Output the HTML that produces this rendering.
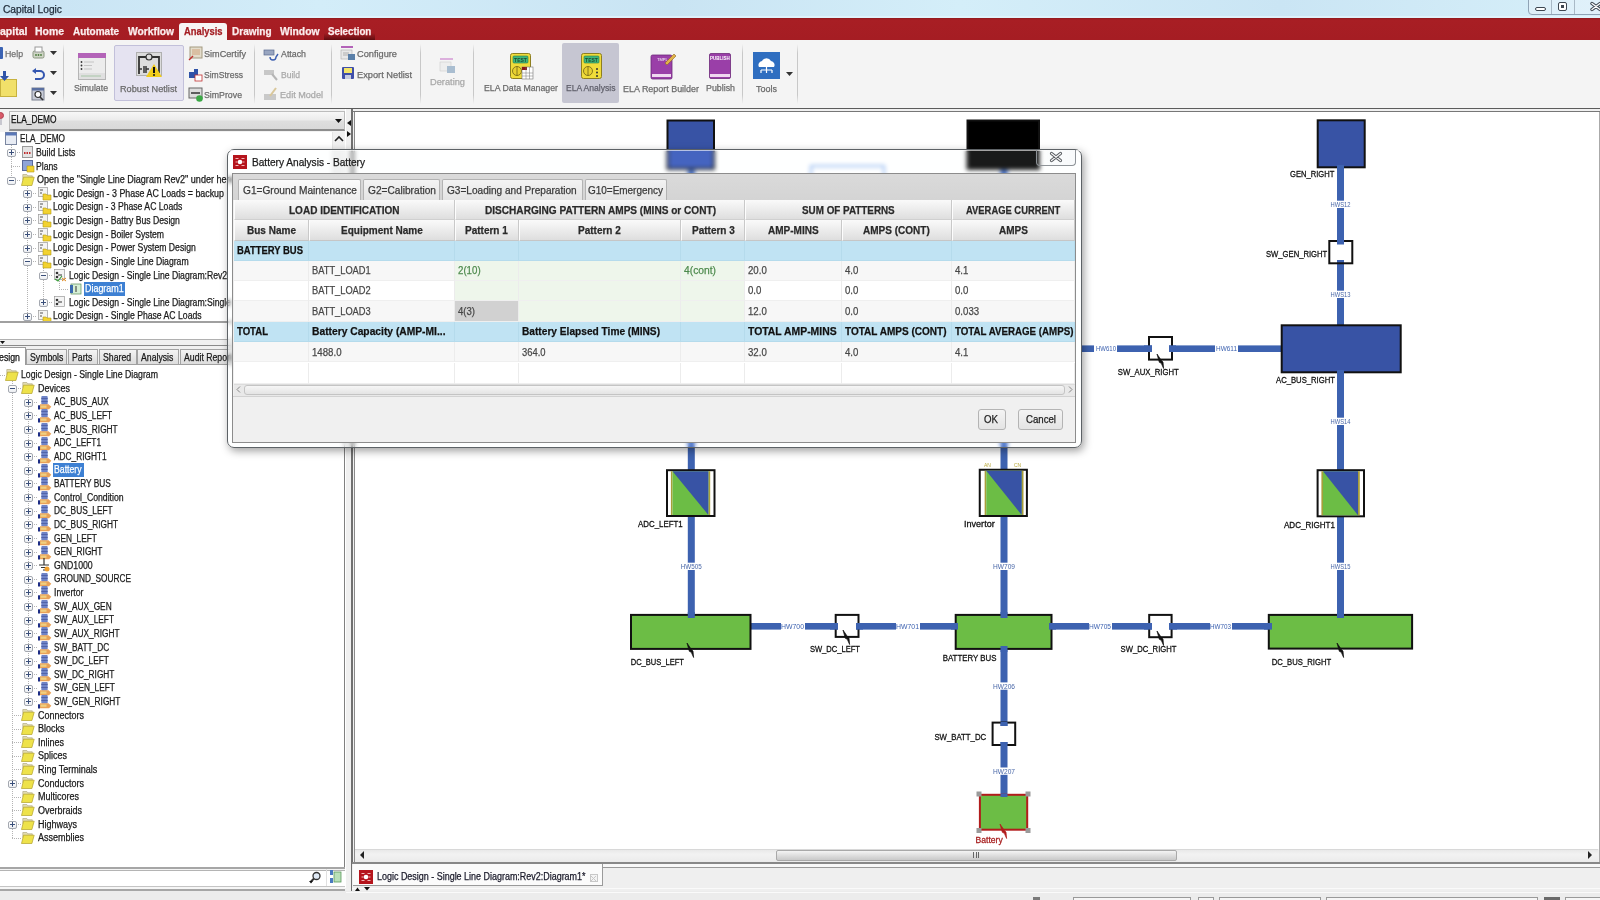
<!DOCTYPE html>
<html><head><meta charset="utf-8">
<style>
*{margin:0;padding:0;box-sizing:border-box}
html,body{width:1600px;height:900px;overflow:hidden;background:#f0f0f0;font-family:"Liberation Sans",sans-serif;color:#222;position:relative}
.a{position:absolute}
.t{position:absolute;white-space:nowrap;line-height:1;-webkit-text-stroke:.25px currentColor}
svg{overflow:visible}
</style></head><body>

<div class="a" style="left:0px;top:0px;width:1600px;height:18px;background:linear-gradient(90deg,#c8e3f3 0%,#d3edf9 20%,#c9e4f3 42%,#d4eef9 60%,#cae5f4 80%,#d6eff9 100%)"></div>
<div class="a" style="left:0px;top:16px;width:1600px;height:1.5px;background:rgba(230,245,252,.7)"></div>
<div class="t" style="left:3.00px;top:5.37px;font-size:10.2px;color:#1f2b38;transform:scaleX(1.0006);transform-origin:0 0;">Capital Logic</div>
<div class="a" style="left:1528px;top:-2px;width:80px;height:17px;border:1px solid #8fa3b5;border-radius:0 0 0 4px;background:rgba(230,242,250,.6)"></div>
<div class="a" style="left:1551px;top:0px;width:1px;height:14px;background:#a9b9c6"></div>
<div class="a" style="left:1574px;top:0px;width:1px;height:14px;background:#a9b9c6"></div>
<div class="a" style="left:1535px;top:7px;width:11px;height:4px;border:1.5px solid #3d4650;border-radius:2px;background:#fff"></div>
<div class="a" style="left:1558px;top:2px;width:9px;height:9px;border:1.5px solid #3d4650;border-radius:2px;background:#fff"></div>
<div class="a" style="left:1561px;top:5px;width:3px;height:3px;background:#3d4650"></div>
<svg class="a" style="left:1590px;top:2px;" width="12" height="9" viewBox="0 0 12 9"><path d="M2 1.5l8 6M10 1.5l-8 6" stroke="#3d4650" stroke-width="3.4" stroke-linecap="round"/><path d="M2 1.5l8 6M10 1.5l-8 6" stroke="#fff" stroke-width="1.4" stroke-linecap="round"/></svg>
<div class="a" style="left:0px;top:18px;width:1600px;height:22px;background:linear-gradient(#8f1a1e 0,#a81e24 2px,#a51d23 100%)"></div>
<div class="t" style="left:0.00px;top:26.54px;font-size:10px;color:#fbeeee;font-weight:bold;transform:scaleX(1.0530);transform-origin:0 0;">apital</div>
<div class="t" style="left:35.00px;top:26.54px;font-size:10px;color:#fbeeee;font-weight:bold;transform:scaleX(1.0438);transform-origin:0 0;">Home</div>
<div class="t" style="left:73.00px;top:26.54px;font-size:10px;color:#fbeeee;font-weight:bold;transform:scaleX(0.9976);transform-origin:0 0;">Automate</div>
<div class="t" style="left:128.00px;top:26.54px;font-size:10px;color:#fbeeee;font-weight:bold;transform:scaleX(1.0265);transform-origin:0 0;">Workflow</div>
<div class="a" style="left:179px;top:23px;width:48px;height:17px;background:#f7f5f5;border-radius:3px 3px 0 0"></div>
<div class="t" style="left:184.00px;top:26.54px;font-size:10px;color:#a51d23;font-weight:bold;transform:scaleX(0.9361);transform-origin:0 0;">Analysis</div>
<div class="t" style="left:231.50px;top:26.54px;font-size:10px;color:#fbeeee;font-weight:bold;transform:scaleX(1.0013);transform-origin:0 0;">Drawing</div>
<div class="t" style="left:280.00px;top:26.54px;font-size:10px;color:#fbeeee;font-weight:bold;transform:scaleX(1.0332);transform-origin:0 0;">Window</div>
<div class="a" style="left:324px;top:33px;width:51px;height:7px;background:linear-gradient(rgba(40,0,0,0),rgba(40,0,0,.55))"></div>
<div class="t" style="left:327.50px;top:26.54px;font-size:10px;color:#fbeeee;font-weight:bold;transform:scaleX(0.9740);transform-origin:0 0;">Selection</div>
<div class="a" style="left:0px;top:40px;width:1600px;height:68px;background:#f4f4f4"></div>
<div class="a" style="left:0px;top:107.6px;width:1600px;height:1.8px;background:#5c5c5c"></div>
<div class="a" style="left:63px;top:44px;width:1px;height:60px;background:linear-gradient(rgba(200,200,200,0),#c8c8c8 15%,#c8c8c8 85%,rgba(200,200,200,0))"></div>
<div class="a" style="left:254px;top:44px;width:1px;height:60px;background:linear-gradient(rgba(200,200,200,0),#c8c8c8 15%,#c8c8c8 85%,rgba(200,200,200,0))"></div>
<div class="a" style="left:331px;top:44px;width:1px;height:60px;background:linear-gradient(rgba(200,200,200,0),#c8c8c8 15%,#c8c8c8 85%,rgba(200,200,200,0))"></div>
<div class="a" style="left:420px;top:44px;width:1px;height:60px;background:linear-gradient(rgba(200,200,200,0),#c8c8c8 15%,#c8c8c8 85%,rgba(200,200,200,0))"></div>
<div class="a" style="left:473px;top:44px;width:1px;height:60px;background:linear-gradient(rgba(200,200,200,0),#c8c8c8 15%,#c8c8c8 85%,rgba(200,200,200,0))"></div>
<div class="a" style="left:742px;top:44px;width:1px;height:60px;background:linear-gradient(rgba(200,200,200,0),#c8c8c8 15%,#c8c8c8 85%,rgba(200,200,200,0))"></div>
<div class="a" style="left:797px;top:44px;width:1px;height:60px;background:linear-gradient(rgba(200,200,200,0),#c8c8c8 15%,#c8c8c8 85%,rgba(200,200,200,0))"></div>
<div class="a" style="left:-2px;top:47px;width:5px;height:12px;background:#3b63b3;border-radius:1px"></div>
<div class="t" style="left:5.00px;top:48.96px;font-size:9.5px;color:#707070;transform:scaleX(0.9213);transform-origin:0 0;">Help</div>
<svg class="a" style="left:32px;top:47px;" width="13" height="13" viewBox="0 0 13 13"><rect x="1" y="4" width="11" height="7" rx="1.5" fill="#cfd6c6" stroke="#8a9480"/><rect x="3" y="0" width="7" height="5" fill="#fff" stroke="#999"/><circle cx="4" cy="8" r=".9" fill="#4a7a3a"/><circle cx="6.5" cy="8" r=".9" fill="#4a7a3a"/><circle cx="9" cy="8" r=".9" fill="#4a7a3a"/></svg>
<svg class="a" style="left:50px;top:51px;" width="7" height="4" viewBox="0 0 7 4"><path d="M0 0h7l-3.5 4z" fill="#333"/></svg>
<svg class="a" style="left:50px;top:71px;" width="7" height="4" viewBox="0 0 7 4"><path d="M0 0h7l-3.5 4z" fill="#333"/></svg>
<svg class="a" style="left:50px;top:91px;" width="7" height="4" viewBox="0 0 7 4"><path d="M0 0h7l-3.5 4z" fill="#333"/></svg>
<div class="a" style="left:0px;top:79px;width:17px;height:18px;background:#f1e06a;border:1px solid #c7b23e"></div>
<svg class="a" style="left:0px;top:71px;" width="9" height="10" viewBox="0 0 9 10"><path d="M3 0h3v5h3l-4.5 5l-4.5-5h3z" fill="#2f53a8"/></svg>
<svg class="a" style="left:32px;top:68px;" width="13" height="12" viewBox="0 0 13 12"><path d="M3 3h5a4 4 0 0 1 0 8h-5" fill="none" stroke="#3356b0" stroke-width="2"/><path d="M0 3l4-3v6z" fill="#3356b0"/></svg>
<svg class="a" style="left:32px;top:88px;" width="13" height="13" viewBox="0 0 13 13"><rect x="0" y="0" width="12" height="12" fill="#c7cbd6" stroke="#7a8090"/><rect x="0" y="0" width="12" height="2.5" fill="#5a6fa0"/><circle cx="6" cy="6.5" r="3" fill="#fff" stroke="#333" stroke-width="1.2"/><path d="M8 9l3 3" stroke="#333" stroke-width="1.6"/></svg>
<svg class="a" style="left:78px;top:53px;" width="28" height="27" viewBox="0 0 28 27"><rect x=".5" y=".5" width="27" height="26" fill="#ececec" stroke="#b5b5b5"/><rect x="0" y="0" width="28" height="5" fill="#b363b8"/><circle cx="3.5" cy="9" r=".9" fill="#333"/><circle cx="3.5" cy="12.5" r=".9" fill="#333"/><circle cx="3.5" cy="16" r=".9" fill="#333"/><path d="M6 9h10M6 12.5h8M6 16h8" stroke="#bbb" stroke-width=".8"/><rect x="1" y="20" width="26" height="6" fill="#e0e0e0"/><path d="M3 23h20" stroke="#9ac09a" stroke-width=".8"/></svg>
<div class="t" style="left:74.00px;top:82.96px;font-size:9.5px;color:#6a6a6a;transform:scaleX(0.9199);transform-origin:0 0;">Simulate</div>
<div class="a" style="left:114px;top:45px;width:70px;height:56px;background:#e5e3f1;border:1px solid #c2c0da;border-radius:2px"></div>
<svg class="a" style="left:136px;top:52px;" width="27" height="26" viewBox="0 0 27 26"><rect x=".5" y=".5" width="25" height="23" fill="#dcdcdc" stroke="#b0b0b0"/><path d="M3 22V5h20v16" fill="none" stroke="#333" stroke-width="1.8"/><circle cx="13" cy="5" r="3" fill="#ddd" stroke="#333" stroke-width="1.2"/><path d="M3 17h3M8 14v7M10 14v7M10 17h3" stroke="#333" stroke-width="1.5"/><path d="M18 12l8 13h-16z" fill="#f2cd1a"/><path d="M18 15v6" stroke="#111" stroke-width="2"/><circle cx="18" cy="23" r="1" fill="#111"/></svg>
<div class="t" style="left:120.00px;top:83.96px;font-size:9.5px;color:#6a6a6a;transform:scaleX(0.9640);transform-origin:0 0;">Robust Netlist</div>
<svg class="a" style="left:189px;top:47px;" width="13" height="14" viewBox="0 0 13 14"><rect x="1" y="0" width="12" height="11" fill="#e3dccb" stroke="#a39a80"/><path d="M3 3h8M3 5h8M3 7h8" stroke="#c58a5a" stroke-width=".7"/><path d="M0 13l4-4" stroke="#c03030" stroke-width="1.5"/></svg>
<div class="t" style="left:204.00px;top:48.96px;font-size:9.5px;color:#6a6a6a;transform:scaleX(0.9588);transform-origin:0 0;">SimCertify</div>
<svg class="a" style="left:189px;top:68px;" width="13" height="13" viewBox="0 0 13 13"><rect x="0" y="4" width="8" height="6" fill="#2f53a8"/><rect x="5" y="1" width="4" height="8" fill="#2f53a8"/><rect x="6" y="7" width="7" height="6" fill="#fff" stroke="#c03030" stroke-width=".8"/></svg>
<div class="t" style="left:204.00px;top:69.96px;font-size:9.5px;color:#6a6a6a;transform:scaleX(0.9010);transform-origin:0 0;">SimStress</div>
<svg class="a" style="left:189px;top:88px;" width="14" height="14" viewBox="0 0 14 14"><rect x="0" y="0" width="13" height="10" fill="#dcdcdc" stroke="#666"/><path d="M2 5h9" stroke="#333" stroke-width="1.5"/><circle cx="10.5" cy="10.5" r="3.3" fill="#3aa845"/></svg>
<div class="t" style="left:204.00px;top:89.96px;font-size:9.5px;color:#6a6a6a;transform:scaleX(0.9229);transform-origin:0 0;">SimProve</div>
<svg class="a" style="left:264px;top:49px;" width="15" height="13" viewBox="0 0 15 13"><rect x="0" y="1" width="10" height="5" fill="#98a5c0" stroke="#5a6a90" stroke-width=".7"/><path d="M6 8a3 3 0 0 0 6 0l2-3" fill="none" stroke="#3d5fb0" stroke-width="1.4"/></svg>
<div class="t" style="left:281.00px;top:48.96px;font-size:9.5px;color:#6a6a6a;transform:scaleX(0.9283);transform-origin:0 0;">Attach</div>
<svg class="a" style="left:264px;top:69px;" width="14" height="12" viewBox="0 0 14 12"><rect x="0" y="1" width="10" height="5" fill="#c7c7c7"/><path d="M8 5l5 6" stroke="#b5b5b5" stroke-width="2"/></svg>
<div class="t" style="left:281.00px;top:69.96px;font-size:9.5px;color:#a8a8a8;transform:scaleX(0.8994);transform-origin:0 0;">Build</div>
<svg class="a" style="left:264px;top:87px;" width="14" height="14" viewBox="0 0 14 14"><rect x="0" y="7" width="12" height="6" fill="#c9c9c9"/><path d="M6 9l6-8" stroke="#d9c79a" stroke-width="2"/></svg>
<div class="t" style="left:280.00px;top:89.96px;font-size:9.5px;color:#a8a8a8;transform:scaleX(0.9581);transform-origin:0 0;">Edit Model</div>
<svg class="a" style="left:341px;top:46px;" width="15" height="15" viewBox="0 0 15 15"><rect x="0" y="0" width="12" height="2" fill="#b363b8"/><rect x="0" y="4" width="11" height="9" fill="#e8e8e8" stroke="#aaa" stroke-width=".6"/><path d="M2 7h6M2 9h6" stroke="#888" stroke-width=".6"/><rect x="7" y="8" width="7" height="6" fill="#5a7fa8"/></svg>
<div class="t" style="left:357.00px;top:48.96px;font-size:9.5px;color:#6a6a6a;transform:scaleX(0.9711);transform-origin:0 0;">Configure</div>
<svg class="a" style="left:342px;top:67px;" width="13" height="13" viewBox="0 0 13 13"><rect x="0" y="0" width="12" height="12" rx="1" fill="#3f4fa8"/><rect x="2" y="1" width="8" height="5" fill="#f3e46a"/><rect x="3" y="8" width="6" height="4" fill="#c8cde0"/></svg>
<div class="t" style="left:357.00px;top:69.96px;font-size:9.5px;color:#6a6a6a;transform:scaleX(0.9737);transform-origin:0 0;">Export Netlist</div>
<svg class="a" style="left:440px;top:58px;" width="16" height="16" viewBox="0 0 16 16"><rect x="0" y="0" width="13" height="2" fill="#dcb0dd"/><rect x="0" y="4" width="11" height="9" fill="#eee" stroke="#ccc" stroke-width=".6"/><rect x="7" y="8" width="8" height="7" fill="#a9bdd0"/></svg>
<div class="t" style="left:430.00px;top:76.96px;font-size:9.5px;color:#a8a8a8;transform:scaleX(0.9748);transform-origin:0 0;">Derating</div>
<svg class="a" style="left:510px;top:53px;" width="24" height="27" viewBox="0 0 24 27"><rect x=".5" y=".5" width="20" height="25" rx="2" fill="#f0dc3a" stroke="#8e7f20"/><rect x="3" y="3" width="15" height="7" rx="1" fill="#3fb87a" stroke="#2a7a50" stroke-width=".6"/><text x="10.5" y="9" font-size="5" font-weight="bold" text-anchor="middle" fill="#1d4a30" font-family="Liberation Sans">TEST</text><circle cx="7" cy="18" r="4.5" fill="#e8d030" stroke="#6e6218" stroke-width=".8"/><path d="M7 13.5v9" stroke="#6e6218" stroke-width=".8"/><rect x="12" y="14" width="11" height="12" fill="#fff" stroke="#777" stroke-width=".6"/><rect x="12" y="14" width="5" height="3" fill="#8b1a1a"/><path d="M12 20h11M12 23h11M16 14v12M19.5 14v12" stroke="#777" stroke-width=".5"/></svg>
<div class="t" style="left:484.00px;top:82.96px;font-size:9.5px;color:#6a6a6a;transform:scaleX(0.9219);transform-origin:0 0;">ELA Data Manager</div>
<div class="a" style="left:562px;top:43px;width:57px;height:60px;background:#c6c6d2;border-radius:2px"></div>
<svg class="a" style="left:581px;top:53px;" width="24" height="27" viewBox="0 0 24 27"><rect x=".5" y=".5" width="20" height="25" rx="2" fill="#f0dc3a" stroke="#8e7f20"/><rect x="3" y="3" width="15" height="7" rx="1" fill="#3fb87a" stroke="#2a7a50" stroke-width=".6"/><text x="10.5" y="9" font-size="5" font-weight="bold" text-anchor="middle" fill="#1d4a30" font-family="Liberation Sans">TEST</text><circle cx="7" cy="18" r="4.5" fill="#e8d030" stroke="#6e6218" stroke-width=".8"/><path d="M7 13.5v9" stroke="#6e6218" stroke-width=".8"/><circle cx="16" cy="16" r="1" fill="#333"/><circle cx="16" cy="19.5" r="1" fill="#333"/><circle cx="16" cy="23" r="1" fill="#333"/></svg>
<div class="t" style="left:566.00px;top:82.96px;font-size:9.5px;color:#5f5f6a;transform:scaleX(0.9013);transform-origin:0 0;">ELA Analysis</div>
<svg class="a" style="left:651px;top:53px;" width="25" height="27" viewBox="0 0 25 27"><rect x="0" y="2" width="21" height="24" rx="1.5" fill="#9a3fa8" stroke="#6d2a7a" stroke-width=".8"/><rect x="1" y="21" width="19" height="3" fill="#f0d8f0"/><text x="6" y="8" font-size="4" fill="#fff" font-family="Liberation Sans">TMPL</text><path d="M14 10l9-9 2 2-9 9z" fill="#e2b14a" stroke="#8a6a20" stroke-width=".6"/></svg>
<div class="t" style="left:623.00px;top:83.96px;font-size:9.5px;color:#6a6a6a;transform:scaleX(0.9407);transform-origin:0 0;">ELA Report Builder</div>
<svg class="a" style="left:709px;top:53px;" width="23" height="27" viewBox="0 0 23 27"><rect x=".5" y=".5" width="21" height="25" rx="1.5" fill="#9a3fa8" stroke="#6d2a7a" stroke-width=".8"/><rect x="1" y="21" width="20" height="3" fill="#f0d8f0"/><text x="11" y="7" font-size="4.5" font-weight="bold" text-anchor="middle" fill="#fff" font-family="Liberation Sans">PUBLISH</text></svg>
<div class="t" style="left:705.50px;top:82.96px;font-size:9.5px;color:#6a6a6a;transform:scaleX(0.9308);transform-origin:0 0;">Publish</div>
<svg class="a" style="left:753px;top:52px;" width="28" height="28" viewBox="0 0 28 28"><rect x="0" y="0" width="27" height="27" fill="#2f6ec0"/><path d="M6 15a4 4 0 0 1 3-6a5 5 0 0 1 9 0a4 4 0 0 1 3 6z" fill="#fff"/><path d="M13.5 15v6M8 18h11M8 18v3M19 18v3" stroke="#fff" stroke-width="1.2" fill="none"/></svg>
<div class="t" style="left:756.00px;top:83.96px;font-size:9.5px;color:#6a6a6a;transform:scaleX(0.9469);transform-origin:0 0;">Tools</div>
<svg class="a" style="left:786px;top:72px;" width="7" height="4" viewBox="0 0 7 4"><path d="M0 0h7l-3.5 4z" fill="#333"/></svg>
<div class="a" style="left:0px;top:109px;width:346px;height:779px;background:#fff"></div>
<div class="a" style="left:343.5px;top:109px;width:1.5px;height:781px;background:#808080"></div>
<div class="a" style="left:345.6px;top:109px;width:6px;height:781px;background:#f0f0f0"></div>
<div class="a" style="left:0px;top:109px;width:345px;height:23px;background:#f2f2f2"></div>
<div class="a" style="left:-3px;top:112px;width:7px;height:7px;background:#d85a68;border-radius:50%;border:1px solid #b04050"></div>
<div class="a" style="left:-1px;top:119px;width:3px;height:6px;background:#c8c8d0"></div>
<div class="a" style="left:9px;top:111px;width:336px;height:20px;background:linear-gradient(#f7f7f7 0,#ececec 45%,#dedede 55%,#d9d9d9 100%);border:1px solid #bcbcbc;border-bottom:2px solid #8d8d8d"></div>
<div class="t" style="left:10.50px;top:115.13px;font-size:10px;color:#111;transform:scaleX(0.8354);transform-origin:0 0;">ELA_DEMO</div>
<svg class="a" style="left:335px;top:119px;" width="7" height="4" viewBox="0 0 7 4"><path d="M0 0h7l-3.5 4z" fill="#111"/></svg>
<svg class="a" style="left:347px;top:120px;" width="4" height="6" viewBox="0 0 4 6"><path d="M4 0v6l-4-3z" fill="#111"/></svg>
<svg class="a" style="left:347px;top:131px;" width="4" height="6" viewBox="0 0 4 6"><path d="M0 0v6l4-3z" fill="#111"/></svg>
<div class="a" style="left:11px;top:145.2px;width:1px;height:34.860000000000014px;background:repeating-linear-gradient(#b4b4b4 0 1px,transparent 1px 2px)"></div>
<div class="a" style="left:27px;top:186.06px;width:1px;height:130.2px;background:repeating-linear-gradient(#b4b4b4 0 1px,transparent 1px 2px)"></div>
<div class="a" style="left:43px;top:267.78px;width:1px;height:34.860000000000014px;background:repeating-linear-gradient(#b4b4b4 0 1px,transparent 1px 2px)"></div>
<div class="a" style="left:59px;top:281.4px;width:1px;height:7.6200000000000045px;background:repeating-linear-gradient(#b4b4b4 0 1px,transparent 1px 2px)"></div>
<div class="a" style="left:11px;top:152px;width:10px;height:1px;background:repeating-linear-gradient(90deg,#b4b4b4 0 1px,transparent 1px 2px)"></div>
<div class="a" style="left:7px;top:148.5px;width:8.5px;height:8px;border:1px solid #a4a8b0;border-radius:2px;background:linear-gradient(#fff,#eceef2)"></div>
<div class="a" style="left:9px;top:152px;width:5px;height:1px;background:#3a4f7a"></div>
<div class="a" style="left:11px;top:150px;width:1px;height:5px;background:#3a4f7a"></div>
<div class="a" style="left:11px;top:166px;width:10px;height:1px;background:repeating-linear-gradient(90deg,#b4b4b4 0 1px,transparent 1px 2px)"></div>
<div class="a" style="left:11px;top:180px;width:10px;height:1px;background:repeating-linear-gradient(90deg,#b4b4b4 0 1px,transparent 1px 2px)"></div>
<div class="a" style="left:7px;top:176.5px;width:8.5px;height:8px;border:1px solid #a4a8b0;border-radius:2px;background:linear-gradient(#fff,#eceef2)"></div>
<div class="a" style="left:9px;top:180px;width:5px;height:1px;background:#3a4f7a"></div>
<div class="a" style="left:27px;top:193px;width:10px;height:1px;background:repeating-linear-gradient(90deg,#b4b4b4 0 1px,transparent 1px 2px)"></div>
<div class="a" style="left:23px;top:189.5px;width:8.5px;height:8px;border:1px solid #a4a8b0;border-radius:2px;background:linear-gradient(#fff,#eceef2)"></div>
<div class="a" style="left:25px;top:193px;width:5px;height:1px;background:#3a4f7a"></div>
<div class="a" style="left:27px;top:191px;width:1px;height:5px;background:#3a4f7a"></div>
<div class="a" style="left:27px;top:207px;width:10px;height:1px;background:repeating-linear-gradient(90deg,#b4b4b4 0 1px,transparent 1px 2px)"></div>
<div class="a" style="left:23px;top:203.5px;width:8.5px;height:8px;border:1px solid #a4a8b0;border-radius:2px;background:linear-gradient(#fff,#eceef2)"></div>
<div class="a" style="left:25px;top:207px;width:5px;height:1px;background:#3a4f7a"></div>
<div class="a" style="left:27px;top:205px;width:1px;height:5px;background:#3a4f7a"></div>
<div class="a" style="left:27px;top:220px;width:10px;height:1px;background:repeating-linear-gradient(90deg,#b4b4b4 0 1px,transparent 1px 2px)"></div>
<div class="a" style="left:23px;top:216.5px;width:8.5px;height:8px;border:1px solid #a4a8b0;border-radius:2px;background:linear-gradient(#fff,#eceef2)"></div>
<div class="a" style="left:25px;top:220px;width:5px;height:1px;background:#3a4f7a"></div>
<div class="a" style="left:27px;top:218px;width:1px;height:5px;background:#3a4f7a"></div>
<div class="a" style="left:27px;top:234px;width:10px;height:1px;background:repeating-linear-gradient(90deg,#b4b4b4 0 1px,transparent 1px 2px)"></div>
<div class="a" style="left:23px;top:230.5px;width:8.5px;height:8px;border:1px solid #a4a8b0;border-radius:2px;background:linear-gradient(#fff,#eceef2)"></div>
<div class="a" style="left:25px;top:234px;width:5px;height:1px;background:#3a4f7a"></div>
<div class="a" style="left:27px;top:232px;width:1px;height:5px;background:#3a4f7a"></div>
<div class="a" style="left:27px;top:248px;width:10px;height:1px;background:repeating-linear-gradient(90deg,#b4b4b4 0 1px,transparent 1px 2px)"></div>
<div class="a" style="left:23px;top:244.5px;width:8.5px;height:8px;border:1px solid #a4a8b0;border-radius:2px;background:linear-gradient(#fff,#eceef2)"></div>
<div class="a" style="left:25px;top:248px;width:5px;height:1px;background:#3a4f7a"></div>
<div class="a" style="left:27px;top:246px;width:1px;height:5px;background:#3a4f7a"></div>
<div class="a" style="left:27px;top:261px;width:10px;height:1px;background:repeating-linear-gradient(90deg,#b4b4b4 0 1px,transparent 1px 2px)"></div>
<div class="a" style="left:23px;top:257.5px;width:8.5px;height:8px;border:1px solid #a4a8b0;border-radius:2px;background:linear-gradient(#fff,#eceef2)"></div>
<div class="a" style="left:25px;top:261px;width:5px;height:1px;background:#3a4f7a"></div>
<div class="a" style="left:43px;top:275px;width:10px;height:1px;background:repeating-linear-gradient(90deg,#b4b4b4 0 1px,transparent 1px 2px)"></div>
<div class="a" style="left:39px;top:271.5px;width:8.5px;height:8px;border:1px solid #a4a8b0;border-radius:2px;background:linear-gradient(#fff,#eceef2)"></div>
<div class="a" style="left:41px;top:275px;width:5px;height:1px;background:#3a4f7a"></div>
<div class="a" style="left:59px;top:289px;width:10px;height:1px;background:repeating-linear-gradient(90deg,#b4b4b4 0 1px,transparent 1px 2px)"></div>
<div class="a" style="left:43px;top:302px;width:10px;height:1px;background:repeating-linear-gradient(90deg,#b4b4b4 0 1px,transparent 1px 2px)"></div>
<div class="a" style="left:39px;top:298.5px;width:8.5px;height:8px;border:1px solid #a4a8b0;border-radius:2px;background:linear-gradient(#fff,#eceef2)"></div>
<div class="a" style="left:41px;top:302px;width:5px;height:1px;background:#3a4f7a"></div>
<div class="a" style="left:43px;top:300px;width:1px;height:5px;background:#3a4f7a"></div>
<div class="a" style="left:27px;top:316px;width:10px;height:1px;background:repeating-linear-gradient(90deg,#b4b4b4 0 1px,transparent 1px 2px)"></div>
<div class="a" style="left:23px;top:312.5px;width:8.5px;height:8px;border:1px solid #a4a8b0;border-radius:2px;background:linear-gradient(#fff,#eceef2)"></div>
<div class="a" style="left:25px;top:316px;width:5px;height:1px;background:#3a4f7a"></div>
<div class="a" style="left:27px;top:314px;width:1px;height:5px;background:#3a4f7a"></div>
<svg class="a" style="left:5px;top:132px;" width="12" height="13" viewBox="0 0 12 13"><rect x=".5" y=".5" width="11" height="12" fill="#e8ecf4" stroke="#7a86a0"/><rect x=".5" y=".5" width="11" height="3" fill="#5a78b8"/></svg>
<div class="t" style="left:20.00px;top:134.33px;font-size:10px;color:#1a1a1a;transform:scaleX(0.8260);transform-origin:0 0;">ELA_DEMO</div>
<svg class="a" style="left:22px;top:146px;" width="12" height="12" viewBox="0 0 12 12"><rect x=".5" y=".5" width="10" height="11" fill="#e4e4e4" stroke="#999"/><path d="M2 7h7" stroke="#c03030" stroke-width="2" stroke-dasharray="1.5 1"/></svg>
<div class="t" style="left:36.00px;top:147.95px;font-size:10px;color:#1a1a1a;transform:scaleX(0.8650);transform-origin:0 0;">Build Lists</div>
<svg class="a" style="left:22px;top:160px;" width="13" height="13" viewBox="0 0 13 13"><rect x=".5" y=".5" width="10" height="10" fill="#8fa4d8" stroke="#5a6a9a"/><path d="M5 6h7v6h-7z" fill="#f2d230" stroke="#b39a1a" stroke-width=".6"/></svg>
<div class="t" style="left:36.00px;top:161.57px;font-size:10px;color:#1a1a1a;transform:scaleX(0.8650);transform-origin:0 0;">Plans</div>
<svg class="a" style="left:21px;top:174px;" width="14" height="12" viewBox="0 0 14 12"><path d="M1.8 .5h4l1 1.3h4.5v4h-9.5z" fill="#e2dcb0" stroke="#a8a078" stroke-width=".6"/><path d="M2.6 3.2h10.6l-2.3 8.3h-10.4z" fill="#eee24a" stroke="#b3a22a" stroke-width=".7"/></svg>
<div class="t" style="left:36.50px;top:175.19px;font-size:10px;color:#1a1a1a;transform:scaleX(0.9050);transform-origin:0 0;">Open the &quot;Single Line Diagram Rev2&quot; under here</div>
<svg class="a" style="left:38px;top:187px;" width="13" height="13" viewBox="0 0 13 13"><rect x=".5" y=".5" width="9" height="9" fill="#f4f4f4" stroke="#9a9a9a" stroke-width=".7"/><path d="M2 3h3M2 6h2" stroke="#555" stroke-width="1"/><path d="M5 7h3l1 1h4v5h-8z" fill="#f2d230" stroke="#b39a1a" stroke-width=".6"/></svg>
<div class="t" style="left:52.70px;top:188.81px;font-size:10px;color:#1a1a1a;transform:scaleX(0.8850);transform-origin:0 0;">Logic Design - 3 Phase AC Loads = backup</div>
<svg class="a" style="left:38px;top:201px;" width="13" height="13" viewBox="0 0 13 13"><rect x=".5" y=".5" width="9" height="9" fill="#f4f4f4" stroke="#9a9a9a" stroke-width=".7"/><path d="M2 3h3M2 6h2" stroke="#555" stroke-width="1"/><path d="M5 7h3l1 1h4v5h-8z" fill="#f2d230" stroke="#b39a1a" stroke-width=".6"/></svg>
<div class="t" style="left:52.70px;top:202.43px;font-size:10px;color:#1a1a1a;transform:scaleX(0.8650);transform-origin:0 0;">Logic Design - 3 Phase AC Loads</div>
<svg class="a" style="left:38px;top:214px;" width="13" height="13" viewBox="0 0 13 13"><rect x=".5" y=".5" width="9" height="9" fill="#f4f4f4" stroke="#9a9a9a" stroke-width=".7"/><path d="M2 3h3M2 6h2" stroke="#555" stroke-width="1"/><path d="M5 7h3l1 1h4v5h-8z" fill="#f2d230" stroke="#b39a1a" stroke-width=".6"/></svg>
<div class="t" style="left:52.70px;top:216.05px;font-size:10px;color:#1a1a1a;transform:scaleX(0.8650);transform-origin:0 0;">Logic Design - Battry Bus Design</div>
<svg class="a" style="left:38px;top:228px;" width="13" height="13" viewBox="0 0 13 13"><rect x=".5" y=".5" width="9" height="9" fill="#f4f4f4" stroke="#9a9a9a" stroke-width=".7"/><path d="M2 3h3M2 6h2" stroke="#555" stroke-width="1"/><path d="M5 7h3l1 1h4v5h-8z" fill="#f2d230" stroke="#b39a1a" stroke-width=".6"/></svg>
<div class="t" style="left:52.70px;top:229.67px;font-size:10px;color:#1a1a1a;transform:scaleX(0.8650);transform-origin:0 0;">Logic Design - Boiler System</div>
<svg class="a" style="left:38px;top:242px;" width="13" height="13" viewBox="0 0 13 13"><rect x=".5" y=".5" width="9" height="9" fill="#f4f4f4" stroke="#9a9a9a" stroke-width=".7"/><path d="M2 3h3M2 6h2" stroke="#555" stroke-width="1"/><path d="M5 7h3l1 1h4v5h-8z" fill="#f2d230" stroke="#b39a1a" stroke-width=".6"/></svg>
<div class="t" style="left:52.70px;top:243.29px;font-size:10px;color:#1a1a1a;transform:scaleX(0.8650);transform-origin:0 0;">Logic Design - Power System Design</div>
<svg class="a" style="left:38px;top:255px;" width="13" height="13" viewBox="0 0 13 13"><rect x=".5" y=".5" width="9" height="9" fill="#f4f4f4" stroke="#9a9a9a" stroke-width=".7"/><path d="M2 3h3M2 6h2" stroke="#555" stroke-width="1"/><path d="M5 7h3l1 1h4v5h-8z" fill="#f2d230" stroke="#b39a1a" stroke-width=".6"/></svg>
<div class="t" style="left:52.70px;top:256.92px;font-size:10px;color:#1a1a1a;transform:scaleX(0.8650);transform-origin:0 0;">Logic Design - Single Line Diagram</div>
<svg class="a" style="left:54px;top:269px;" width="13" height="13" viewBox="0 0 13 13"><rect x=".5" y=".5" width="10" height="10" fill="#f4f4f4" stroke="#9a9a9a" stroke-width=".7"/><circle cx="3" cy="4" r="1.3" fill="#333"/><circle cx="3" cy="8" r="1.3" fill="#333"/><path d="M4 6h4" stroke="#333"/><path d="M1 10l3 2 4-5" stroke="#3a9a3a" stroke-width="1.2" fill="none"/><path d="M8 9l4 3M12 9l-4 3" stroke="#e08a20" stroke-width="1"/></svg>
<div class="t" style="left:68.70px;top:270.54px;font-size:10px;color:#1a1a1a;transform:scaleX(0.8650);transform-origin:0 0;">Logic Design - Single Line Diagram:Rev2</div>
<svg class="a" style="left:70px;top:283px;" width="12" height="12" viewBox="0 0 12 12"><rect x="1" y="1" width="10" height="10" fill="#d6f0d6" stroke="#5a8a5a" stroke-width=".7"/><rect x="0" y="2" width="3" height="8" fill="#3a6ab0"/><path d="M6 3v6" stroke="#333"/></svg>
<div class="a" style="left:83.7px;top:282.02px;width:41.708759375px;height:14px;background:#3d80d3"></div>
<div class="t" style="left:84.70px;top:284.16px;font-size:10px;color:#fff;transform:scaleX(0.8930);transform-origin:0 0;">Diagram1</div>
<svg class="a" style="left:54px;top:296px;" width="13" height="13" viewBox="0 0 13 13"><rect x=".5" y=".5" width="10" height="10" fill="#f4f4f4" stroke="#9a9a9a" stroke-width=".7"/><circle cx="3" cy="4" r="1.3" fill="#333"/><circle cx="3" cy="8" r="1.3" fill="#333"/><path d="M4 6h4" stroke="#333"/></svg>
<div class="t" style="left:68.70px;top:297.78px;font-size:10px;color:#1a1a1a;transform:scaleX(0.8650);transform-origin:0 0;">Logic Design - Single Line Diagram:Single</div>
<svg class="a" style="left:38px;top:310px;" width="13" height="13" viewBox="0 0 13 13"><rect x=".5" y=".5" width="9" height="9" fill="#f4f4f4" stroke="#9a9a9a" stroke-width=".7"/><path d="M2 3h3M2 6h2" stroke="#555" stroke-width="1"/><path d="M5 7h3l1 1h4v5h-8z" fill="#f2d230" stroke="#b39a1a" stroke-width=".6"/></svg>
<div class="t" style="left:52.70px;top:311.40px;font-size:10px;color:#1a1a1a;transform:scaleX(0.8650);transform-origin:0 0;">Logic Design - Single Phase AC Loads</div>
<div class="a" style="left:332px;top:132px;width:13px;height:190px;background:#f0f0f0;border-left:1px solid #e4e4e4"></div>
<svg class="a" style="left:335px;top:136px;" width="8" height="5" viewBox="0 0 8 5"><path d="M0 5l4-4 4 4" fill="none" stroke="#222" stroke-width="1.6"/></svg>
<div class="a" style="left:333px;top:186px;width:11px;height:120px;background:#e6e6e6"></div>
<div class="a" style="left:0px;top:321px;width:345px;height:2px;background:#a0a0a0"></div>
<div class="a" style="left:0px;top:323px;width:345px;height:16px;background:#fff"></div>
<div class="a" style="left:0px;top:339px;width:345px;height:1px;background:#b0b0b0"></div>
<div class="a" style="left:0px;top:340px;width:345px;height:5px;background:#f0f0f0"></div>
<div class="a" style="left:0px;top:345px;width:345px;height:1px;background:#8a8a8a"></div>
<svg class="a" style="left:0px;top:341px;" width="5" height="4" viewBox="0 0 5 4"><path d="M0 0h5l-2.5 3z" fill="#111"/></svg>
<div class="a" style="left:0px;top:346px;width:345px;height:19px;background:#f0f0f0"></div>
<div class="a" style="left:0px;top:364px;width:345px;height:1px;background:#a0a0a0"></div>
<div class="a" style="left:-2px;top:347px;width:27.5px;height:18px;background:#fff;border:1px solid #9a9a9a;border-bottom:none"></div>
<div class="t" style="left:-1.00px;top:352.54px;font-size:10px;color:#111;transform:scaleX(0.8785);transform-origin:0 0;">esign</div>
<div class="a" style="left:25.5px;top:349px;width:41.5px;height:15px;background:linear-gradient(#f4f4f4,#dcdcdc);border:1px solid #a3a3a3;border-bottom:none"></div>
<div class="t" style="left:29.50px;top:352.54px;font-size:10px;color:#1a1a1a;transform:scaleX(0.8700);transform-origin:0 0;">Symbols</div>
<div class="a" style="left:67.7px;top:349px;width:29.89999999999999px;height:15px;background:linear-gradient(#f4f4f4,#dcdcdc);border:1px solid #a3a3a3;border-bottom:none"></div>
<div class="t" style="left:71.70px;top:352.54px;font-size:10px;color:#1a1a1a;transform:scaleX(0.8700);transform-origin:0 0;">Parts</div>
<div class="a" style="left:98.5px;top:349px;width:38.0px;height:15px;background:linear-gradient(#f4f4f4,#dcdcdc);border:1px solid #a3a3a3;border-bottom:none"></div>
<div class="t" style="left:102.50px;top:352.54px;font-size:10px;color:#1a1a1a;transform:scaleX(0.8700);transform-origin:0 0;">Shared</div>
<div class="a" style="left:137px;top:349px;width:41.5px;height:15px;background:linear-gradient(#f4f4f4,#dcdcdc);border:1px solid #a3a3a3;border-bottom:none"></div>
<div class="t" style="left:141.00px;top:352.54px;font-size:10px;color:#1a1a1a;transform:scaleX(0.8700);transform-origin:0 0;">Analysis</div>
<div class="a" style="left:179.5px;top:349px;width:80.5px;height:15px;background:linear-gradient(#f4f4f4,#dcdcdc);border:1px solid #a3a3a3;border-bottom:none"></div>
<div class="t" style="left:183.50px;top:352.54px;font-size:10px;color:#1a1a1a;transform:scaleX(0.8700);transform-origin:0 0;">Audit Report</div>
<div class="a" style="left:12px;top:381px;width:1px;height:457.0799999999999px;background:repeating-linear-gradient(#b4b4b4 0 1px,transparent 1px 2px)"></div>
<div class="a" style="left:28px;top:394.62px;width:1px;height:307.26px;background:repeating-linear-gradient(#b4b4b4 0 1px,transparent 1px 2px)"></div>
<div class="a" style="left:0px;top:375px;width:5px;height:1px;background:repeating-linear-gradient(90deg,#b4b4b4 0 1px,transparent 1px 2px)"></div>
<div class="a" style="left:12px;top:388px;width:9px;height:1px;background:repeating-linear-gradient(90deg,#b4b4b4 0 1px,transparent 1px 2px)"></div>
<div class="a" style="left:8px;top:384.5px;width:8.5px;height:8px;border:1px solid #a4a8b0;border-radius:2px;background:linear-gradient(#fff,#eceef2)"></div>
<div class="a" style="left:10px;top:388px;width:5px;height:1px;background:#3a4f7a"></div>
<div class="a" style="left:28px;top:402px;width:10px;height:1px;background:repeating-linear-gradient(90deg,#b4b4b4 0 1px,transparent 1px 2px)"></div>
<div class="a" style="left:24px;top:398.5px;width:8.5px;height:8px;border:1px solid #a4a8b0;border-radius:2px;background:linear-gradient(#fff,#eceef2)"></div>
<div class="a" style="left:26px;top:402px;width:5px;height:1px;background:#3a4f7a"></div>
<div class="a" style="left:28px;top:400px;width:1px;height:5px;background:#3a4f7a"></div>
<div class="a" style="left:28px;top:415px;width:10px;height:1px;background:repeating-linear-gradient(90deg,#b4b4b4 0 1px,transparent 1px 2px)"></div>
<div class="a" style="left:24px;top:411.5px;width:8.5px;height:8px;border:1px solid #a4a8b0;border-radius:2px;background:linear-gradient(#fff,#eceef2)"></div>
<div class="a" style="left:26px;top:415px;width:5px;height:1px;background:#3a4f7a"></div>
<div class="a" style="left:28px;top:413px;width:1px;height:5px;background:#3a4f7a"></div>
<div class="a" style="left:28px;top:429px;width:10px;height:1px;background:repeating-linear-gradient(90deg,#b4b4b4 0 1px,transparent 1px 2px)"></div>
<div class="a" style="left:24px;top:425.5px;width:8.5px;height:8px;border:1px solid #a4a8b0;border-radius:2px;background:linear-gradient(#fff,#eceef2)"></div>
<div class="a" style="left:26px;top:429px;width:5px;height:1px;background:#3a4f7a"></div>
<div class="a" style="left:28px;top:427px;width:1px;height:5px;background:#3a4f7a"></div>
<div class="a" style="left:28px;top:443px;width:10px;height:1px;background:repeating-linear-gradient(90deg,#b4b4b4 0 1px,transparent 1px 2px)"></div>
<div class="a" style="left:24px;top:439.5px;width:8.5px;height:8px;border:1px solid #a4a8b0;border-radius:2px;background:linear-gradient(#fff,#eceef2)"></div>
<div class="a" style="left:26px;top:443px;width:5px;height:1px;background:#3a4f7a"></div>
<div class="a" style="left:28px;top:441px;width:1px;height:5px;background:#3a4f7a"></div>
<div class="a" style="left:28px;top:456px;width:10px;height:1px;background:repeating-linear-gradient(90deg,#b4b4b4 0 1px,transparent 1px 2px)"></div>
<div class="a" style="left:24px;top:452.5px;width:8.5px;height:8px;border:1px solid #a4a8b0;border-radius:2px;background:linear-gradient(#fff,#eceef2)"></div>
<div class="a" style="left:26px;top:456px;width:5px;height:1px;background:#3a4f7a"></div>
<div class="a" style="left:28px;top:454px;width:1px;height:5px;background:#3a4f7a"></div>
<div class="a" style="left:28px;top:470px;width:10px;height:1px;background:repeating-linear-gradient(90deg,#b4b4b4 0 1px,transparent 1px 2px)"></div>
<div class="a" style="left:24px;top:466.5px;width:8.5px;height:8px;border:1px solid #a4a8b0;border-radius:2px;background:linear-gradient(#fff,#eceef2)"></div>
<div class="a" style="left:26px;top:470px;width:5px;height:1px;background:#3a4f7a"></div>
<div class="a" style="left:28px;top:468px;width:1px;height:5px;background:#3a4f7a"></div>
<div class="a" style="left:28px;top:483px;width:10px;height:1px;background:repeating-linear-gradient(90deg,#b4b4b4 0 1px,transparent 1px 2px)"></div>
<div class="a" style="left:24px;top:479.5px;width:8.5px;height:8px;border:1px solid #a4a8b0;border-radius:2px;background:linear-gradient(#fff,#eceef2)"></div>
<div class="a" style="left:26px;top:483px;width:5px;height:1px;background:#3a4f7a"></div>
<div class="a" style="left:28px;top:481px;width:1px;height:5px;background:#3a4f7a"></div>
<div class="a" style="left:28px;top:497px;width:10px;height:1px;background:repeating-linear-gradient(90deg,#b4b4b4 0 1px,transparent 1px 2px)"></div>
<div class="a" style="left:24px;top:493.5px;width:8.5px;height:8px;border:1px solid #a4a8b0;border-radius:2px;background:linear-gradient(#fff,#eceef2)"></div>
<div class="a" style="left:26px;top:497px;width:5px;height:1px;background:#3a4f7a"></div>
<div class="a" style="left:28px;top:495px;width:1px;height:5px;background:#3a4f7a"></div>
<div class="a" style="left:28px;top:511px;width:10px;height:1px;background:repeating-linear-gradient(90deg,#b4b4b4 0 1px,transparent 1px 2px)"></div>
<div class="a" style="left:24px;top:507.5px;width:8.5px;height:8px;border:1px solid #a4a8b0;border-radius:2px;background:linear-gradient(#fff,#eceef2)"></div>
<div class="a" style="left:26px;top:511px;width:5px;height:1px;background:#3a4f7a"></div>
<div class="a" style="left:28px;top:509px;width:1px;height:5px;background:#3a4f7a"></div>
<div class="a" style="left:28px;top:524px;width:10px;height:1px;background:repeating-linear-gradient(90deg,#b4b4b4 0 1px,transparent 1px 2px)"></div>
<div class="a" style="left:24px;top:520.5px;width:8.5px;height:8px;border:1px solid #a4a8b0;border-radius:2px;background:linear-gradient(#fff,#eceef2)"></div>
<div class="a" style="left:26px;top:524px;width:5px;height:1px;background:#3a4f7a"></div>
<div class="a" style="left:28px;top:522px;width:1px;height:5px;background:#3a4f7a"></div>
<div class="a" style="left:28px;top:538px;width:10px;height:1px;background:repeating-linear-gradient(90deg,#b4b4b4 0 1px,transparent 1px 2px)"></div>
<div class="a" style="left:24px;top:534.5px;width:8.5px;height:8px;border:1px solid #a4a8b0;border-radius:2px;background:linear-gradient(#fff,#eceef2)"></div>
<div class="a" style="left:26px;top:538px;width:5px;height:1px;background:#3a4f7a"></div>
<div class="a" style="left:28px;top:536px;width:1px;height:5px;background:#3a4f7a"></div>
<div class="a" style="left:28px;top:552px;width:10px;height:1px;background:repeating-linear-gradient(90deg,#b4b4b4 0 1px,transparent 1px 2px)"></div>
<div class="a" style="left:24px;top:548.5px;width:8.5px;height:8px;border:1px solid #a4a8b0;border-radius:2px;background:linear-gradient(#fff,#eceef2)"></div>
<div class="a" style="left:26px;top:552px;width:5px;height:1px;background:#3a4f7a"></div>
<div class="a" style="left:28px;top:550px;width:1px;height:5px;background:#3a4f7a"></div>
<div class="a" style="left:28px;top:565px;width:10px;height:1px;background:repeating-linear-gradient(90deg,#b4b4b4 0 1px,transparent 1px 2px)"></div>
<div class="a" style="left:24px;top:561.5px;width:8.5px;height:8px;border:1px solid #a4a8b0;border-radius:2px;background:linear-gradient(#fff,#eceef2)"></div>
<div class="a" style="left:26px;top:565px;width:5px;height:1px;background:#3a4f7a"></div>
<div class="a" style="left:28px;top:563px;width:1px;height:5px;background:#3a4f7a"></div>
<div class="a" style="left:28px;top:579px;width:10px;height:1px;background:repeating-linear-gradient(90deg,#b4b4b4 0 1px,transparent 1px 2px)"></div>
<div class="a" style="left:24px;top:575.5px;width:8.5px;height:8px;border:1px solid #a4a8b0;border-radius:2px;background:linear-gradient(#fff,#eceef2)"></div>
<div class="a" style="left:26px;top:579px;width:5px;height:1px;background:#3a4f7a"></div>
<div class="a" style="left:28px;top:577px;width:1px;height:5px;background:#3a4f7a"></div>
<div class="a" style="left:28px;top:592px;width:10px;height:1px;background:repeating-linear-gradient(90deg,#b4b4b4 0 1px,transparent 1px 2px)"></div>
<div class="a" style="left:24px;top:588.5px;width:8.5px;height:8px;border:1px solid #a4a8b0;border-radius:2px;background:linear-gradient(#fff,#eceef2)"></div>
<div class="a" style="left:26px;top:592px;width:5px;height:1px;background:#3a4f7a"></div>
<div class="a" style="left:28px;top:590px;width:1px;height:5px;background:#3a4f7a"></div>
<div class="a" style="left:28px;top:606px;width:10px;height:1px;background:repeating-linear-gradient(90deg,#b4b4b4 0 1px,transparent 1px 2px)"></div>
<div class="a" style="left:24px;top:602.5px;width:8.5px;height:8px;border:1px solid #a4a8b0;border-radius:2px;background:linear-gradient(#fff,#eceef2)"></div>
<div class="a" style="left:26px;top:606px;width:5px;height:1px;background:#3a4f7a"></div>
<div class="a" style="left:28px;top:604px;width:1px;height:5px;background:#3a4f7a"></div>
<div class="a" style="left:28px;top:620px;width:10px;height:1px;background:repeating-linear-gradient(90deg,#b4b4b4 0 1px,transparent 1px 2px)"></div>
<div class="a" style="left:24px;top:616.5px;width:8.5px;height:8px;border:1px solid #a4a8b0;border-radius:2px;background:linear-gradient(#fff,#eceef2)"></div>
<div class="a" style="left:26px;top:620px;width:5px;height:1px;background:#3a4f7a"></div>
<div class="a" style="left:28px;top:618px;width:1px;height:5px;background:#3a4f7a"></div>
<div class="a" style="left:28px;top:633px;width:10px;height:1px;background:repeating-linear-gradient(90deg,#b4b4b4 0 1px,transparent 1px 2px)"></div>
<div class="a" style="left:24px;top:629.5px;width:8.5px;height:8px;border:1px solid #a4a8b0;border-radius:2px;background:linear-gradient(#fff,#eceef2)"></div>
<div class="a" style="left:26px;top:633px;width:5px;height:1px;background:#3a4f7a"></div>
<div class="a" style="left:28px;top:631px;width:1px;height:5px;background:#3a4f7a"></div>
<div class="a" style="left:28px;top:647px;width:10px;height:1px;background:repeating-linear-gradient(90deg,#b4b4b4 0 1px,transparent 1px 2px)"></div>
<div class="a" style="left:24px;top:643.5px;width:8.5px;height:8px;border:1px solid #a4a8b0;border-radius:2px;background:linear-gradient(#fff,#eceef2)"></div>
<div class="a" style="left:26px;top:647px;width:5px;height:1px;background:#3a4f7a"></div>
<div class="a" style="left:28px;top:645px;width:1px;height:5px;background:#3a4f7a"></div>
<div class="a" style="left:28px;top:661px;width:10px;height:1px;background:repeating-linear-gradient(90deg,#b4b4b4 0 1px,transparent 1px 2px)"></div>
<div class="a" style="left:24px;top:657.5px;width:8.5px;height:8px;border:1px solid #a4a8b0;border-radius:2px;background:linear-gradient(#fff,#eceef2)"></div>
<div class="a" style="left:26px;top:661px;width:5px;height:1px;background:#3a4f7a"></div>
<div class="a" style="left:28px;top:659px;width:1px;height:5px;background:#3a4f7a"></div>
<div class="a" style="left:28px;top:674px;width:10px;height:1px;background:repeating-linear-gradient(90deg,#b4b4b4 0 1px,transparent 1px 2px)"></div>
<div class="a" style="left:24px;top:670.5px;width:8.5px;height:8px;border:1px solid #a4a8b0;border-radius:2px;background:linear-gradient(#fff,#eceef2)"></div>
<div class="a" style="left:26px;top:674px;width:5px;height:1px;background:#3a4f7a"></div>
<div class="a" style="left:28px;top:672px;width:1px;height:5px;background:#3a4f7a"></div>
<div class="a" style="left:28px;top:688px;width:10px;height:1px;background:repeating-linear-gradient(90deg,#b4b4b4 0 1px,transparent 1px 2px)"></div>
<div class="a" style="left:24px;top:684.5px;width:8.5px;height:8px;border:1px solid #a4a8b0;border-radius:2px;background:linear-gradient(#fff,#eceef2)"></div>
<div class="a" style="left:26px;top:688px;width:5px;height:1px;background:#3a4f7a"></div>
<div class="a" style="left:28px;top:686px;width:1px;height:5px;background:#3a4f7a"></div>
<div class="a" style="left:28px;top:701px;width:10px;height:1px;background:repeating-linear-gradient(90deg,#b4b4b4 0 1px,transparent 1px 2px)"></div>
<div class="a" style="left:24px;top:697.5px;width:8.5px;height:8px;border:1px solid #a4a8b0;border-radius:2px;background:linear-gradient(#fff,#eceef2)"></div>
<div class="a" style="left:26px;top:701px;width:5px;height:1px;background:#3a4f7a"></div>
<div class="a" style="left:28px;top:699px;width:1px;height:5px;background:#3a4f7a"></div>
<div class="a" style="left:12px;top:715px;width:9px;height:1px;background:repeating-linear-gradient(90deg,#b4b4b4 0 1px,transparent 1px 2px)"></div>
<div class="a" style="left:12px;top:729px;width:9px;height:1px;background:repeating-linear-gradient(90deg,#b4b4b4 0 1px,transparent 1px 2px)"></div>
<div class="a" style="left:12px;top:742px;width:9px;height:1px;background:repeating-linear-gradient(90deg,#b4b4b4 0 1px,transparent 1px 2px)"></div>
<div class="a" style="left:12px;top:756px;width:9px;height:1px;background:repeating-linear-gradient(90deg,#b4b4b4 0 1px,transparent 1px 2px)"></div>
<div class="a" style="left:12px;top:769px;width:9px;height:1px;background:repeating-linear-gradient(90deg,#b4b4b4 0 1px,transparent 1px 2px)"></div>
<div class="a" style="left:12px;top:783px;width:9px;height:1px;background:repeating-linear-gradient(90deg,#b4b4b4 0 1px,transparent 1px 2px)"></div>
<div class="a" style="left:8px;top:779.5px;width:8.5px;height:8px;border:1px solid #a4a8b0;border-radius:2px;background:linear-gradient(#fff,#eceef2)"></div>
<div class="a" style="left:10px;top:783px;width:5px;height:1px;background:#3a4f7a"></div>
<div class="a" style="left:12px;top:781px;width:1px;height:5px;background:#3a4f7a"></div>
<div class="a" style="left:12px;top:797px;width:9px;height:1px;background:repeating-linear-gradient(90deg,#b4b4b4 0 1px,transparent 1px 2px)"></div>
<div class="a" style="left:12px;top:810px;width:9px;height:1px;background:repeating-linear-gradient(90deg,#b4b4b4 0 1px,transparent 1px 2px)"></div>
<div class="a" style="left:12px;top:824px;width:9px;height:1px;background:repeating-linear-gradient(90deg,#b4b4b4 0 1px,transparent 1px 2px)"></div>
<div class="a" style="left:8px;top:820.5px;width:8.5px;height:8px;border:1px solid #a4a8b0;border-radius:2px;background:linear-gradient(#fff,#eceef2)"></div>
<div class="a" style="left:10px;top:824px;width:5px;height:1px;background:#3a4f7a"></div>
<div class="a" style="left:12px;top:822px;width:1px;height:5px;background:#3a4f7a"></div>
<div class="a" style="left:12px;top:838px;width:9px;height:1px;background:repeating-linear-gradient(90deg,#b4b4b4 0 1px,transparent 1px 2px)"></div>
<svg class="a" style="left:5px;top:369px;" width="14" height="12" viewBox="0 0 14 12"><path d="M1.8 .5h4l1 1.3h4.5v4h-9.5z" fill="#e2dcb0" stroke="#a8a078" stroke-width=".6"/><path d="M2.6 3.2h10.6l-2.3 8.3h-10.4z" fill="#eee24a" stroke="#b3a22a" stroke-width=".7"/></svg>
<div class="t" style="left:21.30px;top:370.14px;font-size:10px;color:#1a1a1a;transform:scaleX(0.8740);transform-origin:0 0;">Logic Design - Single Line Diagram</div>
<svg class="a" style="left:21px;top:382px;" width="14" height="12" viewBox="0 0 14 12"><path d="M1.8 .5h4l1 1.3h4.5v4h-9.5z" fill="#e2dcb0" stroke="#a8a078" stroke-width=".6"/><path d="M2.6 3.2h10.6l-2.3 8.3h-10.4z" fill="#eee24a" stroke="#b3a22a" stroke-width=".7"/></svg>
<div class="t" style="left:38.00px;top:383.76px;font-size:10px;color:#1a1a1a;transform:scaleX(0.9000);transform-origin:0 0;">Devices</div>
<svg class="a" style="left:38px;top:395.5px;" width="14" height="14" viewBox="0 0 14 14"><rect x="3.3" y="0" width="6.4" height="8.5" rx="1" fill="#6f84c8"/><path d="M3.3 2.5h6.4M3.3 5.5h6.4" stroke="#4a5aa0" stroke-width=".8"/><path d="M2 8.2h8.5l2.8 2.6-2.2 2.5h-9.1z" fill="#e9a258"/><rect x="2.5" y="9.5" width="6" height="2.3" fill="#f0d080"/><rect x="0" y="9.3" width="2" height="4.2" fill="#1c2c84"/></svg>
<div class="t" style="left:54.00px;top:397.38px;font-size:10px;color:#1a1a1a;transform:scaleX(0.8300);transform-origin:0 0;">AC_BUS_AUX</div>
<svg class="a" style="left:38px;top:408.5px;" width="14" height="14" viewBox="0 0 14 14"><rect x="3.3" y="0" width="6.4" height="8.5" rx="1" fill="#6f84c8"/><path d="M3.3 2.5h6.4M3.3 5.5h6.4" stroke="#4a5aa0" stroke-width=".8"/><path d="M2 8.2h8.5l2.8 2.6-2.2 2.5h-9.1z" fill="#e9a258"/><rect x="2.5" y="9.5" width="6" height="2.3" fill="#f0d080"/><rect x="0" y="9.3" width="2" height="4.2" fill="#1c2c84"/></svg>
<div class="t" style="left:54.00px;top:411.00px;font-size:10px;color:#1a1a1a;transform:scaleX(0.8300);transform-origin:0 0;">AC_BUS_LEFT</div>
<svg class="a" style="left:38px;top:422.5px;" width="14" height="14" viewBox="0 0 14 14"><rect x="3.3" y="0" width="6.4" height="8.5" rx="1" fill="#6f84c8"/><path d="M3.3 2.5h6.4M3.3 5.5h6.4" stroke="#4a5aa0" stroke-width=".8"/><path d="M2 8.2h8.5l2.8 2.6-2.2 2.5h-9.1z" fill="#e9a258"/><rect x="2.5" y="9.5" width="6" height="2.3" fill="#f0d080"/><rect x="0" y="9.3" width="2" height="4.2" fill="#1c2c84"/></svg>
<div class="t" style="left:54.00px;top:424.62px;font-size:10px;color:#1a1a1a;transform:scaleX(0.8300);transform-origin:0 0;">AC_BUS_RIGHT</div>
<svg class="a" style="left:38px;top:436.5px;" width="14" height="14" viewBox="0 0 14 14"><rect x="3.3" y="0" width="6.4" height="8.5" rx="1" fill="#6f84c8"/><path d="M3.3 2.5h6.4M3.3 5.5h6.4" stroke="#4a5aa0" stroke-width=".8"/><path d="M2 8.2h8.5l2.8 2.6-2.2 2.5h-9.1z" fill="#e9a258"/><rect x="2.5" y="9.5" width="6" height="2.3" fill="#f0d080"/><rect x="0" y="9.3" width="2" height="4.2" fill="#1c2c84"/></svg>
<div class="t" style="left:54.00px;top:438.24px;font-size:10px;color:#1a1a1a;transform:scaleX(0.8300);transform-origin:0 0;">ADC_LEFT1</div>
<svg class="a" style="left:38px;top:449.5px;" width="14" height="14" viewBox="0 0 14 14"><rect x="3.3" y="0" width="6.4" height="8.5" rx="1" fill="#6f84c8"/><path d="M3.3 2.5h6.4M3.3 5.5h6.4" stroke="#4a5aa0" stroke-width=".8"/><path d="M2 8.2h8.5l2.8 2.6-2.2 2.5h-9.1z" fill="#e9a258"/><rect x="2.5" y="9.5" width="6" height="2.3" fill="#f0d080"/><rect x="0" y="9.3" width="2" height="4.2" fill="#1c2c84"/></svg>
<div class="t" style="left:54.00px;top:451.86px;font-size:10px;color:#1a1a1a;transform:scaleX(0.8300);transform-origin:0 0;">ADC_RIGHT1</div>
<svg class="a" style="left:38px;top:463.5px;" width="14" height="14" viewBox="0 0 14 14"><rect x="3.3" y="0" width="6.4" height="8.5" rx="1" fill="#6f84c8"/><path d="M3.3 2.5h6.4M3.3 5.5h6.4" stroke="#4a5aa0" stroke-width=".8"/><path d="M2 8.2h8.5l2.8 2.6-2.2 2.5h-9.1z" fill="#e9a258"/><rect x="2.5" y="9.5" width="6" height="2.3" fill="#f0d080"/><rect x="0" y="9.3" width="2" height="4.2" fill="#1c2c84"/></svg>
<div class="a" style="left:53px;top:463.34px;width:30.55996875px;height:14px;background:#3d80d3"></div>
<div class="t" style="left:54.00px;top:465.48px;font-size:10px;color:#fff;transform:scaleX(0.8700);transform-origin:0 0;">Battery</div>
<svg class="a" style="left:38px;top:476.5px;" width="14" height="14" viewBox="0 0 14 14"><rect x="3.3" y="0" width="6.4" height="8.5" rx="1" fill="#6f84c8"/><path d="M3.3 2.5h6.4M3.3 5.5h6.4" stroke="#4a5aa0" stroke-width=".8"/><path d="M2 8.2h8.5l2.8 2.6-2.2 2.5h-9.1z" fill="#e9a258"/><rect x="2.5" y="9.5" width="6" height="2.3" fill="#f0d080"/><rect x="0" y="9.3" width="2" height="4.2" fill="#1c2c84"/></svg>
<div class="t" style="left:54.00px;top:479.10px;font-size:10px;color:#1a1a1a;transform:scaleX(0.8300);transform-origin:0 0;">BATTERY BUS</div>
<svg class="a" style="left:38px;top:490.5px;" width="14" height="14" viewBox="0 0 14 14"><rect x="3.3" y="0" width="6.4" height="8.5" rx="1" fill="#6f84c8"/><path d="M3.3 2.5h6.4M3.3 5.5h6.4" stroke="#4a5aa0" stroke-width=".8"/><path d="M2 8.2h8.5l2.8 2.6-2.2 2.5h-9.1z" fill="#e9a258"/><rect x="2.5" y="9.5" width="6" height="2.3" fill="#f0d080"/><rect x="0" y="9.3" width="2" height="4.2" fill="#1c2c84"/></svg>
<div class="t" style="left:54.00px;top:492.72px;font-size:10px;color:#1a1a1a;transform:scaleX(0.8700);transform-origin:0 0;">Control_Condition</div>
<svg class="a" style="left:38px;top:504.5px;" width="14" height="14" viewBox="0 0 14 14"><rect x="3.3" y="0" width="6.4" height="8.5" rx="1" fill="#6f84c8"/><path d="M3.3 2.5h6.4M3.3 5.5h6.4" stroke="#4a5aa0" stroke-width=".8"/><path d="M2 8.2h8.5l2.8 2.6-2.2 2.5h-9.1z" fill="#e9a258"/><rect x="2.5" y="9.5" width="6" height="2.3" fill="#f0d080"/><rect x="0" y="9.3" width="2" height="4.2" fill="#1c2c84"/></svg>
<div class="t" style="left:54.00px;top:506.33px;font-size:10px;color:#1a1a1a;transform:scaleX(0.8300);transform-origin:0 0;">DC_BUS_LEFT</div>
<svg class="a" style="left:38px;top:517.5px;" width="14" height="14" viewBox="0 0 14 14"><rect x="3.3" y="0" width="6.4" height="8.5" rx="1" fill="#6f84c8"/><path d="M3.3 2.5h6.4M3.3 5.5h6.4" stroke="#4a5aa0" stroke-width=".8"/><path d="M2 8.2h8.5l2.8 2.6-2.2 2.5h-9.1z" fill="#e9a258"/><rect x="2.5" y="9.5" width="6" height="2.3" fill="#f0d080"/><rect x="0" y="9.3" width="2" height="4.2" fill="#1c2c84"/></svg>
<div class="t" style="left:54.00px;top:519.95px;font-size:10px;color:#1a1a1a;transform:scaleX(0.8300);transform-origin:0 0;">DC_BUS_RIGHT</div>
<svg class="a" style="left:38px;top:531.5px;" width="14" height="14" viewBox="0 0 14 14"><rect x="3.3" y="0" width="6.4" height="8.5" rx="1" fill="#6f84c8"/><path d="M3.3 2.5h6.4M3.3 5.5h6.4" stroke="#4a5aa0" stroke-width=".8"/><path d="M2 8.2h8.5l2.8 2.6-2.2 2.5h-9.1z" fill="#e9a258"/><rect x="2.5" y="9.5" width="6" height="2.3" fill="#f0d080"/><rect x="0" y="9.3" width="2" height="4.2" fill="#1c2c84"/></svg>
<div class="t" style="left:54.00px;top:533.58px;font-size:10px;color:#1a1a1a;transform:scaleX(0.8300);transform-origin:0 0;">GEN_LEFT</div>
<svg class="a" style="left:38px;top:545.5px;" width="14" height="14" viewBox="0 0 14 14"><rect x="3.3" y="0" width="6.4" height="8.5" rx="1" fill="#6f84c8"/><path d="M3.3 2.5h6.4M3.3 5.5h6.4" stroke="#4a5aa0" stroke-width=".8"/><path d="M2 8.2h8.5l2.8 2.6-2.2 2.5h-9.1z" fill="#e9a258"/><rect x="2.5" y="9.5" width="6" height="2.3" fill="#f0d080"/><rect x="0" y="9.3" width="2" height="4.2" fill="#1c2c84"/></svg>
<div class="t" style="left:54.00px;top:547.19px;font-size:10px;color:#1a1a1a;transform:scaleX(0.8300);transform-origin:0 0;">GEN_RIGHT</div>
<svg class="a" style="left:38px;top:558px;" width="13" height="14" viewBox="0 0 13 14"><path d="M6 0v7M1 7h10M3 9.5h6M5 12h2" stroke="#333" stroke-width="1.2"/><circle cx="9" cy="11" r="2.5" fill="#f0a030"/></svg>
<div class="t" style="left:54.00px;top:560.81px;font-size:10px;color:#1a1a1a;transform:scaleX(0.8700);transform-origin:0 0;">GND1000</div>
<svg class="a" style="left:38px;top:572.5px;" width="14" height="14" viewBox="0 0 14 14"><rect x="3.3" y="0" width="6.4" height="8.5" rx="1" fill="#6f84c8"/><path d="M3.3 2.5h6.4M3.3 5.5h6.4" stroke="#4a5aa0" stroke-width=".8"/><path d="M2 8.2h8.5l2.8 2.6-2.2 2.5h-9.1z" fill="#e9a258"/><rect x="2.5" y="9.5" width="6" height="2.3" fill="#f0d080"/><rect x="0" y="9.3" width="2" height="4.2" fill="#1c2c84"/></svg>
<div class="t" style="left:54.00px;top:574.43px;font-size:10px;color:#1a1a1a;transform:scaleX(0.8300);transform-origin:0 0;">GROUND_SOURCE</div>
<svg class="a" style="left:38px;top:585.5px;" width="14" height="14" viewBox="0 0 14 14"><rect x="3.3" y="0" width="6.4" height="8.5" rx="1" fill="#6f84c8"/><path d="M3.3 2.5h6.4M3.3 5.5h6.4" stroke="#4a5aa0" stroke-width=".8"/><path d="M2 8.2h8.5l2.8 2.6-2.2 2.5h-9.1z" fill="#e9a258"/><rect x="2.5" y="9.5" width="6" height="2.3" fill="#f0d080"/><rect x="0" y="9.3" width="2" height="4.2" fill="#1c2c84"/></svg>
<div class="t" style="left:54.00px;top:588.05px;font-size:10px;color:#1a1a1a;transform:scaleX(0.8700);transform-origin:0 0;">Invertor</div>
<svg class="a" style="left:38px;top:599.5px;" width="14" height="14" viewBox="0 0 14 14"><rect x="3.3" y="0" width="6.4" height="8.5" rx="1" fill="#6f84c8"/><path d="M3.3 2.5h6.4M3.3 5.5h6.4" stroke="#4a5aa0" stroke-width=".8"/><path d="M2 8.2h8.5l2.8 2.6-2.2 2.5h-9.1z" fill="#e9a258"/><rect x="2.5" y="9.5" width="6" height="2.3" fill="#f0d080"/><rect x="0" y="9.3" width="2" height="4.2" fill="#1c2c84"/></svg>
<div class="t" style="left:54.00px;top:601.67px;font-size:10px;color:#1a1a1a;transform:scaleX(0.8300);transform-origin:0 0;">SW_AUX_GEN</div>
<svg class="a" style="left:38px;top:613.5px;" width="14" height="14" viewBox="0 0 14 14"><rect x="3.3" y="0" width="6.4" height="8.5" rx="1" fill="#6f84c8"/><path d="M3.3 2.5h6.4M3.3 5.5h6.4" stroke="#4a5aa0" stroke-width=".8"/><path d="M2 8.2h8.5l2.8 2.6-2.2 2.5h-9.1z" fill="#e9a258"/><rect x="2.5" y="9.5" width="6" height="2.3" fill="#f0d080"/><rect x="0" y="9.3" width="2" height="4.2" fill="#1c2c84"/></svg>
<div class="t" style="left:54.00px;top:615.29px;font-size:10px;color:#1a1a1a;transform:scaleX(0.8300);transform-origin:0 0;">SW_AUX_LEFT</div>
<svg class="a" style="left:38px;top:626.5px;" width="14" height="14" viewBox="0 0 14 14"><rect x="3.3" y="0" width="6.4" height="8.5" rx="1" fill="#6f84c8"/><path d="M3.3 2.5h6.4M3.3 5.5h6.4" stroke="#4a5aa0" stroke-width=".8"/><path d="M2 8.2h8.5l2.8 2.6-2.2 2.5h-9.1z" fill="#e9a258"/><rect x="2.5" y="9.5" width="6" height="2.3" fill="#f0d080"/><rect x="0" y="9.3" width="2" height="4.2" fill="#1c2c84"/></svg>
<div class="t" style="left:54.00px;top:628.91px;font-size:10px;color:#1a1a1a;transform:scaleX(0.8300);transform-origin:0 0;">SW_AUX_RIGHT</div>
<svg class="a" style="left:38px;top:640.5px;" width="14" height="14" viewBox="0 0 14 14"><rect x="3.3" y="0" width="6.4" height="8.5" rx="1" fill="#6f84c8"/><path d="M3.3 2.5h6.4M3.3 5.5h6.4" stroke="#4a5aa0" stroke-width=".8"/><path d="M2 8.2h8.5l2.8 2.6-2.2 2.5h-9.1z" fill="#e9a258"/><rect x="2.5" y="9.5" width="6" height="2.3" fill="#f0d080"/><rect x="0" y="9.3" width="2" height="4.2" fill="#1c2c84"/></svg>
<div class="t" style="left:54.00px;top:642.53px;font-size:10px;color:#1a1a1a;transform:scaleX(0.8300);transform-origin:0 0;">SW_BATT_DC</div>
<svg class="a" style="left:38px;top:654.5px;" width="14" height="14" viewBox="0 0 14 14"><rect x="3.3" y="0" width="6.4" height="8.5" rx="1" fill="#6f84c8"/><path d="M3.3 2.5h6.4M3.3 5.5h6.4" stroke="#4a5aa0" stroke-width=".8"/><path d="M2 8.2h8.5l2.8 2.6-2.2 2.5h-9.1z" fill="#e9a258"/><rect x="2.5" y="9.5" width="6" height="2.3" fill="#f0d080"/><rect x="0" y="9.3" width="2" height="4.2" fill="#1c2c84"/></svg>
<div class="t" style="left:54.00px;top:656.15px;font-size:10px;color:#1a1a1a;transform:scaleX(0.8300);transform-origin:0 0;">SW_DC_LEFT</div>
<svg class="a" style="left:38px;top:667.5px;" width="14" height="14" viewBox="0 0 14 14"><rect x="3.3" y="0" width="6.4" height="8.5" rx="1" fill="#6f84c8"/><path d="M3.3 2.5h6.4M3.3 5.5h6.4" stroke="#4a5aa0" stroke-width=".8"/><path d="M2 8.2h8.5l2.8 2.6-2.2 2.5h-9.1z" fill="#e9a258"/><rect x="2.5" y="9.5" width="6" height="2.3" fill="#f0d080"/><rect x="0" y="9.3" width="2" height="4.2" fill="#1c2c84"/></svg>
<div class="t" style="left:54.00px;top:669.77px;font-size:10px;color:#1a1a1a;transform:scaleX(0.8300);transform-origin:0 0;">SW_DC_RIGHT</div>
<svg class="a" style="left:38px;top:681.5px;" width="14" height="14" viewBox="0 0 14 14"><rect x="3.3" y="0" width="6.4" height="8.5" rx="1" fill="#6f84c8"/><path d="M3.3 2.5h6.4M3.3 5.5h6.4" stroke="#4a5aa0" stroke-width=".8"/><path d="M2 8.2h8.5l2.8 2.6-2.2 2.5h-9.1z" fill="#e9a258"/><rect x="2.5" y="9.5" width="6" height="2.3" fill="#f0d080"/><rect x="0" y="9.3" width="2" height="4.2" fill="#1c2c84"/></svg>
<div class="t" style="left:54.00px;top:683.39px;font-size:10px;color:#1a1a1a;transform:scaleX(0.8300);transform-origin:0 0;">SW_GEN_LEFT</div>
<svg class="a" style="left:38px;top:694.5px;" width="14" height="14" viewBox="0 0 14 14"><rect x="3.3" y="0" width="6.4" height="8.5" rx="1" fill="#6f84c8"/><path d="M3.3 2.5h6.4M3.3 5.5h6.4" stroke="#4a5aa0" stroke-width=".8"/><path d="M2 8.2h8.5l2.8 2.6-2.2 2.5h-9.1z" fill="#e9a258"/><rect x="2.5" y="9.5" width="6" height="2.3" fill="#f0d080"/><rect x="0" y="9.3" width="2" height="4.2" fill="#1c2c84"/></svg>
<div class="t" style="left:54.00px;top:697.01px;font-size:10px;color:#1a1a1a;transform:scaleX(0.8300);transform-origin:0 0;">SW_GEN_RIGHT</div>
<svg class="a" style="left:21px;top:709px;" width="14" height="12" viewBox="0 0 14 12"><path d="M1.8 .5h4l1 1.3h4.5v4h-9.5z" fill="#e2dcb0" stroke="#a8a078" stroke-width=".6"/><path d="M2.6 3.2h10.6l-2.3 8.3h-10.4z" fill="#eee24a" stroke="#b3a22a" stroke-width=".7"/></svg>
<div class="t" style="left:38.00px;top:710.63px;font-size:10px;color:#1a1a1a;transform:scaleX(0.9000);transform-origin:0 0;">Connectors</div>
<svg class="a" style="left:21px;top:723px;" width="14" height="12" viewBox="0 0 14 12"><path d="M1.8 .5h4l1 1.3h4.5v4h-9.5z" fill="#e2dcb0" stroke="#a8a078" stroke-width=".6"/><path d="M2.6 3.2h10.6l-2.3 8.3h-10.4z" fill="#eee24a" stroke="#b3a22a" stroke-width=".7"/></svg>
<div class="t" style="left:38.00px;top:724.25px;font-size:10px;color:#1a1a1a;transform:scaleX(0.9000);transform-origin:0 0;">Blocks</div>
<svg class="a" style="left:21px;top:736px;" width="14" height="12" viewBox="0 0 14 12"><path d="M1.8 .5h4l1 1.3h4.5v4h-9.5z" fill="#e2dcb0" stroke="#a8a078" stroke-width=".6"/><path d="M2.6 3.2h10.6l-2.3 8.3h-10.4z" fill="#eee24a" stroke="#b3a22a" stroke-width=".7"/></svg>
<div class="t" style="left:38.00px;top:737.88px;font-size:10px;color:#1a1a1a;transform:scaleX(0.9000);transform-origin:0 0;">Inlines</div>
<svg class="a" style="left:21px;top:750px;" width="14" height="12" viewBox="0 0 14 12"><path d="M1.8 .5h4l1 1.3h4.5v4h-9.5z" fill="#e2dcb0" stroke="#a8a078" stroke-width=".6"/><path d="M2.6 3.2h10.6l-2.3 8.3h-10.4z" fill="#eee24a" stroke="#b3a22a" stroke-width=".7"/></svg>
<div class="t" style="left:38.00px;top:751.49px;font-size:10px;color:#1a1a1a;transform:scaleX(0.9000);transform-origin:0 0;">Splices</div>
<svg class="a" style="left:21px;top:763px;" width="14" height="12" viewBox="0 0 14 12"><path d="M1.8 .5h4l1 1.3h4.5v4h-9.5z" fill="#e2dcb0" stroke="#a8a078" stroke-width=".6"/><path d="M2.6 3.2h10.6l-2.3 8.3h-10.4z" fill="#eee24a" stroke="#b3a22a" stroke-width=".7"/></svg>
<div class="t" style="left:38.00px;top:765.12px;font-size:10px;color:#1a1a1a;transform:scaleX(0.9000);transform-origin:0 0;">Ring Terminals</div>
<svg class="a" style="left:21px;top:777px;" width="14" height="12" viewBox="0 0 14 12"><path d="M1.8 .5h4l1 1.3h4.5v4h-9.5z" fill="#e2dcb0" stroke="#a8a078" stroke-width=".6"/><path d="M2.6 3.2h10.6l-2.3 8.3h-10.4z" fill="#eee24a" stroke="#b3a22a" stroke-width=".7"/></svg>
<div class="t" style="left:38.00px;top:778.73px;font-size:10px;color:#1a1a1a;transform:scaleX(0.9000);transform-origin:0 0;">Conductors</div>
<svg class="a" style="left:21px;top:791px;" width="14" height="12" viewBox="0 0 14 12"><path d="M1.8 .5h4l1 1.3h4.5v4h-9.5z" fill="#e2dcb0" stroke="#a8a078" stroke-width=".6"/><path d="M2.6 3.2h10.6l-2.3 8.3h-10.4z" fill="#eee24a" stroke="#b3a22a" stroke-width=".7"/></svg>
<div class="t" style="left:38.00px;top:792.36px;font-size:10px;color:#1a1a1a;transform:scaleX(0.9000);transform-origin:0 0;">Multicores</div>
<svg class="a" style="left:21px;top:804px;" width="14" height="12" viewBox="0 0 14 12"><path d="M1.8 .5h4l1 1.3h4.5v4h-9.5z" fill="#e2dcb0" stroke="#a8a078" stroke-width=".6"/><path d="M2.6 3.2h10.6l-2.3 8.3h-10.4z" fill="#eee24a" stroke="#b3a22a" stroke-width=".7"/></svg>
<div class="t" style="left:38.00px;top:805.97px;font-size:10px;color:#1a1a1a;transform:scaleX(0.9000);transform-origin:0 0;">Overbraids</div>
<svg class="a" style="left:21px;top:818px;" width="14" height="12" viewBox="0 0 14 12"><path d="M1.8 .5h4l1 1.3h4.5v4h-9.5z" fill="#e2dcb0" stroke="#a8a078" stroke-width=".6"/><path d="M2.6 3.2h10.6l-2.3 8.3h-10.4z" fill="#eee24a" stroke="#b3a22a" stroke-width=".7"/></svg>
<div class="t" style="left:38.00px;top:819.60px;font-size:10px;color:#1a1a1a;transform:scaleX(0.9000);transform-origin:0 0;">Highways</div>
<svg class="a" style="left:21px;top:832px;" width="14" height="12" viewBox="0 0 14 12"><path d="M1.8 .5h4l1 1.3h4.5v4h-9.5z" fill="#e2dcb0" stroke="#a8a078" stroke-width=".6"/><path d="M2.6 3.2h10.6l-2.3 8.3h-10.4z" fill="#eee24a" stroke="#b3a22a" stroke-width=".7"/></svg>
<div class="t" style="left:38.00px;top:833.21px;font-size:10px;color:#1a1a1a;transform:scaleX(0.9000);transform-origin:0 0;">Assemblies</div>
<div class="a" style="left:0px;top:867.2px;width:345px;height:1.5px;background:#a6a6a6"></div>
<div class="a" style="left:0px;top:868.7px;width:345px;height:1.3px;background:#f4f4f4"></div>
<div class="a" style="left:0px;top:870px;width:345px;height:1px;background:#b4b4b4"></div>
<div class="a" style="left:0px;top:871px;width:345px;height:15.5px;background:#fff"></div>
<div class="a" style="left:0px;top:886.3px;width:345px;height:1px;background:#c4c4c4"></div>
<div class="a" style="left:0px;top:887.3px;width:345px;height:2px;background:#f6f6f6"></div>
<div class="a" style="left:0px;top:889.3px;width:345px;height:1.4px;background:#a6a6a6"></div>
<div class="a" style="left:326px;top:869px;width:1px;height:17px;background:#e0e0e0"></div>
<svg class="a" style="left:309px;top:871px;" width="13" height="13" viewBox="0 0 13 13"><circle cx="7.5" cy="5" r="3.5" fill="#dfe9f5" stroke="#333" stroke-width="1.3"/><path d="M5 7.5l-3.5 3.5" stroke="#333" stroke-width="2"/><path d="M0 10h4l-2 2.5z" fill="#111"/></svg>
<svg class="a" style="left:329px;top:869px;" width="13" height="15" viewBox="0 0 13 15"><rect x="1" y="1" width="3" height="5" fill="#4a7ac0"/><rect x="1" y="9" width="3" height="5" fill="#4a7ac0"/><rect x="5" y="3" width="7" height="10" fill="#b9e0b9" stroke="#5a9a5a" stroke-width=".8"/></svg>
<div class="a" style="left:351px;top:109px;width:1249px;height:783px;background:#f0f0f0"></div>
<div class="a" style="left:351px;top:109px;width:1.5px;height:783px;background:#707070"></div>
<div class="a" style="left:354px;top:111px;width:1.2px;height:752px;background:#8a8a8a"></div>
<div class="a" style="left:352px;top:111px;width:1248px;height:1.2px;background:#777"></div>
<div class="a" style="left:355px;top:112px;width:1244px;height:737px;background:#fff"></div>
<div class="a" style="left:1598.5px;top:112px;width:1.5px;height:751px;background:#aaa"></div>
<div class="a" style="left:355px;top:112px;width:1243px;height:737px;overflow:hidden">
<svg style="position:absolute;left:-355px;top:-112px" width="1600" height="900" viewBox="0 0 1600 900"><rect x="687.8" y="165" width="7" height="306" fill="#3d62b0"/><rect x="687.8" y="514.2" width="7" height="102.79999999999995" fill="#3d62b0"/><rect x="1000.5" y="165" width="7" height="306" fill="#3d62b0"/><rect x="1000.5" y="514" width="7" height="103" fill="#3d62b0"/><rect x="1000.5" y="646" width="7" height="80" fill="#3d62b0"/><rect x="1000.5" y="742" width="7" height="55" fill="#3d62b0"/><rect x="1337.0" y="165" width="7" height="79" fill="#3d62b0"/><rect x="1337.0" y="260" width="7" height="68" fill="#3d62b0"/><rect x="1337.0" y="370" width="7" height="101" fill="#3d62b0"/><rect x="1337.0" y="514.5" width="7" height="102.5" fill="#3d62b0"/><rect x="1082" y="345.4" width="12" height="6.6" fill="#3d62b0"/><rect x="1117" y="345.4" width="35" height="6.6" fill="#3d62b0"/><rect x="1169" y="345.4" width="46" height="6.6" fill="#3d62b0"/><rect x="1238" y="345.4" width="46" height="6.6" fill="#3d62b0"/><rect x="748" y="623.0" width="33" height="6.6" fill="#3d62b0"/><rect x="805" y="623.0" width="33" height="6.6" fill="#3d62b0"/><rect x="856" y="623.0" width="40" height="6.6" fill="#3d62b0"/><rect x="920" y="623.0" width="38" height="6.6" fill="#3d62b0"/><rect x="1049" y="623.0" width="40" height="6.6" fill="#3d62b0"/><rect x="1112" y="623.0" width="40" height="6.6" fill="#3d62b0"/><rect x="1169" y="623.0" width="41" height="6.6" fill="#3d62b0"/><rect x="1232" y="623.0" width="40" height="6.6" fill="#3d62b0"/><rect x="667.5" y="120.5" width="46.5" height="48.5" fill="#3853a5" stroke="#111" stroke-width="2"/><rect x="967.5" y="120.5" width="71.5" height="48.5" fill="#000" stroke="#111" stroke-width="2"/><rect x="811" y="166" width="73" height="40" fill="#fff" stroke="#9dbbe6" stroke-width="2"/><rect x="1317.7" y="120.3" width="47.0" height="47.000000000000014" fill="#3853a5" stroke="#111" stroke-width="2"/><rect x="1329.3" y="241.0" width="23.0" height="22.30000000000001" fill="none" stroke="#111" stroke-width="2"/><rect x="1337.0" y="165" width="7" height="79.5" fill="#3d62b0"/><rect x="1281.7" y="325.3" width="119.0" height="47.0" fill="#3853a5" stroke="#111" stroke-width="2"/><rect x="1337.0" y="370" width="7" height="10" fill="#3d62b0"/><rect x="1149.0" y="337.0" width="23" height="22.600000000000023" fill="none" stroke="#111" stroke-width="2"/><rect x="1144" y="345.4" width="8" height="6.6" fill="#3d62b0"/><rect x="1169" y="345.4" width="7" height="6.6" fill="#3d62b0"/><path d="M1157 354 L1161.2 360.2 L1163 362 L1163.6 368.5 L1161.3 363.3 L1159.3 362.3 Z" fill="#111" stroke="#111" stroke-width=".7" stroke-linejoin="round"/><rect x="667.0" y="470.2" width="47.5" height="45.80000000000001" fill="#fff" stroke="#111" stroke-width="2"/><rect x="670.9" y="471.2" width="1.6" height="43.80000000000001" fill="#a89e3a"/><rect x="708.4" y="471.2" width="1.8" height="43.80000000000001" fill="#a89e3a"/><rect x="672.5" y="471.2" width="35.89999999999998" height="43.80000000000001" fill="#6cbd45"/><path d="M672.5 471.2 L708.4 471.2 L708.4 515 Z" fill="#3853a5"/><rect x="979.75" y="469.75" width="47.15000000000009" height="46.25" fill="#fff" stroke="#111" stroke-width="2"/><rect x="984.65" y="470.75" width="1.6" height="44.25" fill="#a89e3a"/><rect x="1021.7" y="470.75" width="1.8" height="44.25" fill="#a89e3a"/><rect x="986.25" y="470.75" width="35.450000000000045" height="44.25" fill="#6cbd45"/><path d="M986.25 470.75 L1021.7 470.75 L1021.7 515 Z" fill="#3853a5"/><text x="984" y="467" font-size="5" fill="#b8a83a" font-family="Liberation Sans">AN</text><text x="1014" y="467" font-size="5" fill="#b8a83a" font-family="Liberation Sans">CN</text><rect x="1317.6" y="470.2" width="46.40000000000009" height="46.099999999999966" fill="#fff" stroke="#111" stroke-width="2"/><rect x="1321.4" y="471.2" width="1.6" height="44.099999999999966" fill="#a89e3a"/><rect x="1358" y="471.2" width="1.8" height="44.099999999999966" fill="#a89e3a"/><rect x="1323" y="471.2" width="35" height="44.099999999999966" fill="#6cbd45"/><path d="M1323 471.2 L1358 471.2 L1358 515.3 Z" fill="#3853a5"/><rect x="631.0" y="614.9" width="119.5" height="34.0" fill="#6cbd45" stroke="#111" stroke-width="2"/><rect x="687.8" y="612" width="7" height="6" fill="#3d62b0"/><path d="M687 643 L691.2 649.2 L693 651 L693.6 657.5 L691.3 652.3 L689.3 651.3 Z" fill="#111" stroke="#111" stroke-width=".7" stroke-linejoin="round"/><rect x="835.7" y="614.9" width="22.799999999999955" height="22.0" fill="none" stroke="#111" stroke-width="2"/><rect x="830" y="623.0" width="8" height="6.6" fill="#3d62b0"/><rect x="856" y="623.0" width="7" height="6.6" fill="#3d62b0"/><path d="M843 630 L847.2 636.2 L849 638 L849.6 644.5 L847.3 639.3 L845.3 638.3 Z" fill="#111" stroke="#111" stroke-width=".7" stroke-linejoin="round"/><rect x="955.7" y="614.9" width="95.79999999999995" height="34.0" fill="#6cbd45" stroke="#111" stroke-width="2"/><rect x="1000.5" y="612" width="7" height="6" fill="#3d62b0"/><rect x="1000.5" y="646" width="7" height="6" fill="#3d62b0"/><rect x="951" y="623.0" width="7" height="6.6" fill="#3d62b0"/><rect x="1049" y="623.0" width="7" height="6.6" fill="#3d62b0"/><rect x="1149.2" y="614.9" width="22.399999999999864" height="22.300000000000068" fill="none" stroke="#111" stroke-width="2"/><rect x="1144" y="623.0" width="8" height="6.6" fill="#3d62b0"/><rect x="1169" y="623.0" width="8" height="6.6" fill="#3d62b0"/><path d="M1157 631 L1161.2 637.2 L1163 639 L1163.6 645.5 L1161.3 640.3 L1159.3 639.3 Z" fill="#111" stroke="#111" stroke-width=".7" stroke-linejoin="round"/><rect x="1268.8" y="614.9" width="143.29999999999995" height="33.700000000000045" fill="#6cbd45" stroke="#111" stroke-width="2"/><rect x="1264" y="623.0" width="8" height="6.6" fill="#3d62b0"/><rect x="1337.0" y="612" width="7" height="6" fill="#3d62b0"/><path d="M1337 643 L1341.2 649.2 L1343 651 L1343.6 657.5 L1341.3 652.3 L1339.3 651.3 Z" fill="#111" stroke="#111" stroke-width=".7" stroke-linejoin="round"/><rect x="992.6" y="722.6" width="22.600000000000023" height="22.399999999999977" fill="none" stroke="#111" stroke-width="2"/><rect x="1000.5" y="722" width="7" height="4" fill="#3d62b0"/><rect x="1000.5" y="742" width="7" height="4" fill="#3d62b0"/><rect x="979.9" y="794.8" width="47.30000000000007" height="34.90000000000009" fill="#6cbd45" stroke="#b21c1c" stroke-width="2"/><rect x="1000.5" y="794" width="7" height="3" fill="#3d62b0"/><rect x="976.5" y="791.5" width="5" height="5" fill="#9a9a9a"/><rect x="1025.5" y="791.5" width="5" height="5" fill="#9a9a9a"/><rect x="976.5" y="828.0" width="5" height="5" fill="#9a9a9a"/><rect x="1025.5" y="828.0" width="5" height="5" fill="#9a9a9a"/><path d="M1000 824 L1004.2 830.2 L1006 832 L1006.6 838.5 L1004.3 833.3 L1002.3 832.3 Z" fill="#b21c1c" stroke="#b21c1c" stroke-width=".7" stroke-linejoin="round"/><rect x="1336.5" y="200.7" width="8" height="7.3" fill="#fff"/><text x="1340.5" y="207.3" font-size="6.3" text-anchor="middle" fill="#4a68a8" textLength="20" lengthAdjust="spacingAndGlyphs" font-family="Liberation Sans">HWS12</text><rect x="1336.5" y="290.7" width="8" height="7.3" fill="#fff"/><text x="1340.5" y="297.3" font-size="6.3" text-anchor="middle" fill="#4a68a8" textLength="20" lengthAdjust="spacingAndGlyphs" font-family="Liberation Sans">HWS13</text><rect x="1336.5" y="417.7" width="8" height="7.3" fill="#fff"/><text x="1340.5" y="424.3" font-size="6.3" text-anchor="middle" fill="#4a68a8" textLength="20" lengthAdjust="spacingAndGlyphs" font-family="Liberation Sans">HWS14</text><rect x="1336.5" y="562.7" width="8" height="7.3" fill="#fff"/><text x="1340.5" y="569.3" font-size="6.3" text-anchor="middle" fill="#4a68a8" textLength="20" lengthAdjust="spacingAndGlyphs" font-family="Liberation Sans">HWS15</text><rect x="687.3" y="562.7" width="8" height="7.3" fill="#fff"/><text x="691.3" y="569.3" font-size="6.3" text-anchor="middle" fill="#4a68a8" textLength="21" lengthAdjust="spacingAndGlyphs" font-family="Liberation Sans">HW505</text><rect x="1000" y="562.7" width="8" height="7.3" fill="#fff"/><text x="1004" y="569.3" font-size="6.3" text-anchor="middle" fill="#4a68a8" textLength="22" lengthAdjust="spacingAndGlyphs" font-family="Liberation Sans">HW709</text><rect x="1000" y="682.4000000000001" width="8" height="7.3" fill="#fff"/><text x="1004" y="689.0" font-size="6.3" text-anchor="middle" fill="#4a68a8" textLength="22" lengthAdjust="spacingAndGlyphs" font-family="Liberation Sans">HW206</text><rect x="1000" y="767.5" width="8" height="7.3" fill="#fff"/><text x="1004" y="774.0999999999999" font-size="6.3" text-anchor="middle" fill="#4a68a8" textLength="22" lengthAdjust="spacingAndGlyphs" font-family="Liberation Sans">HW207</text><text x="1096" y="351.3" font-size="6.3" fill="#3d62b0" textLength="20" lengthAdjust="spacingAndGlyphs" font-family="Liberation Sans">HW610</text><text x="1216" y="351.3" font-size="6.3" fill="#3d62b0" textLength="21" lengthAdjust="spacingAndGlyphs" font-family="Liberation Sans">HW611</text><text x="781" y="628.8" font-size="6.3" fill="#3d62b0" textLength="23" lengthAdjust="spacingAndGlyphs" font-family="Liberation Sans">HW700</text><text x="896" y="628.8" font-size="6.3" fill="#3d62b0" textLength="23" lengthAdjust="spacingAndGlyphs" font-family="Liberation Sans">HW701</text><text x="1089" y="628.8" font-size="6.3" fill="#3d62b0" textLength="22" lengthAdjust="spacingAndGlyphs" font-family="Liberation Sans">HW705</text><text x="1210" y="628.8" font-size="6.3" fill="#3d62b0" textLength="21" lengthAdjust="spacingAndGlyphs" font-family="Liberation Sans">HW703</text><text x="1290" y="177.3" font-size="9.6" fill="#111" stroke="#111" stroke-width=".3" textLength="44.299999999999955" lengthAdjust="spacingAndGlyphs" font-family="Liberation Sans">GEN_RIGHT</text><text x="1266" y="257.3" font-size="9.6" fill="#111" stroke="#111" stroke-width=".3" textLength="61.299999999999955" lengthAdjust="spacingAndGlyphs" font-family="Liberation Sans">SW_GEN_RIGHT</text><text x="1276" y="383.3" font-size="9.6" fill="#111" stroke="#111" stroke-width=".3" textLength="59" lengthAdjust="spacingAndGlyphs" font-family="Liberation Sans">AC_BUS_RIGHT</text><text x="1117.8" y="375" font-size="9.6" fill="#111" stroke="#111" stroke-width=".3" textLength="61.0" lengthAdjust="spacingAndGlyphs" font-family="Liberation Sans">SW_AUX_RIGHT</text><text x="638.1" y="526.7" font-size="9.6" fill="#111" stroke="#111" stroke-width=".3" textLength="44.60000000000002" lengthAdjust="spacingAndGlyphs" font-family="Liberation Sans">ADC_LEFT1</text><text x="630.7" y="665.3" font-size="9.6" fill="#111" stroke="#111" stroke-width=".3" textLength="53.299999999999955" lengthAdjust="spacingAndGlyphs" font-family="Liberation Sans">DC_BUS_LEFT</text><text x="809.9" y="652" font-size="9.6" fill="#111" stroke="#111" stroke-width=".3" textLength="50.10000000000002" lengthAdjust="spacingAndGlyphs" font-family="Liberation Sans">SW_DC_LEFT</text><text x="964" y="526.7" font-size="9.6" fill="#111" stroke="#111" stroke-width=".3" textLength="30.700000000000045" lengthAdjust="spacingAndGlyphs" font-family="Liberation Sans">Invertor</text><text x="942.7" y="660.8" font-size="9.6" fill="#111" stroke="#111" stroke-width=".3" textLength="53.799999999999955" lengthAdjust="spacingAndGlyphs" font-family="Liberation Sans">BATTERY BUS</text><text x="1284" y="527.7" font-size="9.6" fill="#111" stroke="#111" stroke-width=".3" textLength="51" lengthAdjust="spacingAndGlyphs" font-family="Liberation Sans">ADC_RIGHT1</text><text x="1120.6" y="651.9" font-size="9.6" fill="#111" stroke="#111" stroke-width=".3" textLength="55.90000000000009" lengthAdjust="spacingAndGlyphs" font-family="Liberation Sans">SW_DC_RIGHT</text><text x="1271.7" y="665.2" font-size="9.6" fill="#111" stroke="#111" stroke-width=".3" textLength="59.5" lengthAdjust="spacingAndGlyphs" font-family="Liberation Sans">DC_BUS_RIGHT</text><text x="934.4" y="740" font-size="9.6" fill="#111" stroke="#111" stroke-width=".3" textLength="51.80000000000007" lengthAdjust="spacingAndGlyphs" font-family="Liberation Sans">SW_BATT_DC</text><text x="975.6" y="842.5" font-size="9.6" fill="#a82020" stroke="#a82020" stroke-width=".3" textLength="27.100000000000023" lengthAdjust="spacingAndGlyphs" font-family="Liberation Sans">Battery</text></svg>
</div>
<div class="a" style="left:355px;top:849px;width:1243px;height:13px;background:linear-gradient(#e6e6e6,#f2f2f2 40%,#ebebeb)"></div>
<div class="a" style="left:355px;top:848.5px;width:1243px;height:1px;background:#d8d8d8"></div>
<svg class="a" style="left:359px;top:851px;" width="6" height="8" viewBox="0 0 6 8"><path d="M5 0v8l-4-4z" fill="#222"/></svg>
<svg class="a" style="left:1587px;top:851px;" width="6" height="8" viewBox="0 0 6 8"><path d="M1 0v8l4-4z" fill="#222"/></svg>
<div class="a" style="left:775.5px;top:849.5px;width:401.5px;height:11.5px;background:linear-gradient(#f4f4f4,#dcdcdc 55%,#c9c9c9);border:1px solid #a9a9a9;border-radius:2px"></div>
<div class="a" style="left:973px;top:852px;width:1px;height:6px;background:#666"></div>
<div class="a" style="left:975.5px;top:852px;width:1px;height:6px;background:#666"></div>
<div class="a" style="left:978px;top:852px;width:1px;height:6px;background:#666"></div>
<div class="a" style="left:352px;top:862px;width:1248px;height:1.5px;background:#888"></div>
<div class="a" style="left:352px;top:863.5px;width:1248px;height:28px;background:#efefef"></div>
<div class="a" style="left:603px;top:863.5px;width:997px;height:3px;background:#f8f8f8"></div>
<div class="a" style="left:603px;top:866.5px;width:997px;height:1.3px;background:#9a9a9a"></div>
<div class="a" style="left:353px;top:863.5px;width:250px;height:22.5px;background:#fbfbfb;border-right:1.3px solid #9a9a9a;border-bottom:1.3px solid #9a9a9a"></div>
<div class="a" style="left:352px;top:887.5px;width:1248px;height:1px;background:#fafafa"></div>
<svg class="a" style="left:359px;top:870px;" width="14" height="14" viewBox="0 0 14 14"><rect width="14" height="14" fill="#b5141c"/><path d="M2.5 3.5h3M2.5 10.5h3M8.5 3.5h3M8.5 10.5h3M2.5 7h2M9.5 7h2" stroke="#f3b5b5" stroke-width="1.2"/><circle cx="7" cy="7" r="2.3" fill="#fff"/></svg>
<div class="t" style="left:376.50px;top:872.03px;font-size:10px;color:#1a1a2a;transform:scaleX(0.8953);transform-origin:0 0;">Logic Design - Single Line Diagram:Rev2:Diagram1*</div>
<div class="a" style="left:589.5px;top:874px;width:8px;height:8px;border:1px solid #c8c8c8;background:#f4f4f4"></div>
<svg class="a" style="left:590px;top:875px;" width="7" height="7" viewBox="0 0 7 7"><path d="M1 1l5 5M6 1l-5 5" stroke="#c8c8c8" stroke-width="1"/></svg>
<svg class="a" style="left:355px;top:887px;" width="5" height="4" viewBox="0 0 5 4"><path d="M0 4l2.5-3.5 2.5 3.5z" fill="#111"/></svg>
<svg class="a" style="left:364px;top:887px;" width="6" height="4" viewBox="0 0 6 4"><path d="M0 0h6l-3 3.5z" fill="#111"/></svg>
<div class="a" style="left:0px;top:891px;width:1600px;height:9px;background:#ececec"></div>
<div class="a" style="left:346px;top:891.5px;width:1254px;height:1px;background:#fafafa"></div>
<div class="a" style="left:1073.4px;top:897px;width:117.59999999999991px;height:5px;border:1px solid #9a9a9a;border-bottom:none;background:#f6f6f6"></div>
<div class="a" style="left:1197.6px;top:897px;width:16.200000000000045px;height:5px;border:1px solid #9a9a9a;border-bottom:none;background:#f6f6f6"></div>
<div class="a" style="left:1219px;top:897px;width:101.70000000000005px;height:5px;border:1px solid #9a9a9a;border-bottom:none;background:#f6f6f6"></div>
<div class="a" style="left:1326px;top:897px;width:212px;height:5px;border:1px solid #9a9a9a;border-bottom:none;background:#f6f6f6"></div>
<div class="a" style="left:1564.5px;top:897px;width:36.5px;height:5px;border:1px solid #9a9a9a;border-bottom:none;background:#f6f6f6"></div>
<div class="a" style="left:1544px;top:897px;width:15.6px;height:4px;background:#6a6a6a"></div>
<div class="a" style="left:1033px;top:897px;width:7px;height:4px;background:#7a7a7a"></div>
<div class="a" style="left:227px;top:149px;width:855px;height:299px;border:1px solid #5d6266;border-radius:7px;background:rgba(250,252,253,.1);backdrop-filter:blur(2.2px) saturate(1.25);box-shadow:2px 3px 9px rgba(0,0,0,.38)"></div>
<div class="a" style="left:228px;top:150px;width:853px;height:1px;background:rgba(255,255,255,.6)"></div>
<svg class="a" style="left:233px;top:155px;" width="14" height="14" viewBox="0 0 14 14"><rect width="14" height="14" fill="#b5141c"/><path d="M2.5 3.5h3M2.5 10.5h3M8.5 3.5h3M8.5 10.5h3M2.5 7h2M9.5 7h2" stroke="#f3b5b5" stroke-width="1.2"/><circle cx="7" cy="7" r="2.3" fill="#fff"/></svg>
<div class="t" style="left:252.00px;top:156.61px;font-size:10.5px;color:#1b1b1b;transform:scaleX(0.9634);transform-origin:0 0;">Battery Analysis - Battery</div>
<div class="a" style="left:1036px;top:149.5px;width:40px;height:16.5px;border:1px solid #8e9398;border-top:none;border-radius:0 0 4px 4px;background:linear-gradient(90deg,rgba(245,248,250,0),rgba(245,248,250,.5) 45%,rgba(245,248,250,.7))"></div>
<svg class="a" style="left:1050px;top:152px;" width="12" height="10" viewBox="0 0 12 10"><path d="M1.5 1.5l9 7M10.5 1.5l-9 7" stroke="#55595e" stroke-width="3.2" stroke-linecap="round"/><path d="M1.5 1.5l9 7M10.5 1.5l-9 7" stroke="#f4f4f4" stroke-width="1.3" stroke-linecap="round"/></svg>
<div class="a" style="left:232px;top:173px;width:844px;height:270px;background:#f0f0f0;border:1px solid #8c8c8c"></div>
<div class="a" style="left:233px;top:174px;width:842px;height:26px;background:linear-gradient(#dadada,#d4d4d4)"></div>
<div class="a" style="left:238px;top:179px;width:123px;height:21px;background:linear-gradient(#fbfbfb,#ededed);border:1px solid #b3b3b3;border-bottom:none;border-radius:2px 2px 0 0"></div>
<div class="t" style="left:242.80px;top:184.61px;font-size:10.5px;color:#3a3a3a;transform:scaleX(0.9645);transform-origin:0 0;">G1=Ground Maintenance</div>
<div class="a" style="left:363px;top:179px;width:77px;height:21px;background:linear-gradient(#f3f3f3,#e4e4e4);border:1px solid #b3b3b3;border-bottom:none;border-radius:2px 2px 0 0"></div>
<div class="t" style="left:367.80px;top:184.61px;font-size:10.5px;color:#3a3a3a;transform:scaleX(0.9669);transform-origin:0 0;">G2=Calibration</div>
<div class="a" style="left:442px;top:179px;width:141px;height:21px;background:linear-gradient(#f3f3f3,#e4e4e4);border:1px solid #b3b3b3;border-bottom:none;border-radius:2px 2px 0 0"></div>
<div class="t" style="left:446.90px;top:184.61px;font-size:10.5px;color:#3a3a3a;transform:scaleX(0.9598);transform-origin:0 0;">G3=Loading and Preparation</div>
<div class="a" style="left:584.5px;top:179px;width:82.5px;height:21px;background:linear-gradient(#f3f3f3,#e4e4e4);border:1px solid #b3b3b3;border-bottom:none;border-radius:2px 2px 0 0"></div>
<div class="t" style="left:588.00px;top:184.61px;font-size:10.5px;color:#3a3a3a;transform:scaleX(0.9484);transform-origin:0 0;">G10=Emergency</div>
<div class="a" style="left:234px;top:200px;width:841px;height:183.5px;background:#fff"></div>
<div class="a" style="left:234px;top:200px;width:221px;height:20px;background:linear-gradient(#fafafa,#ececec 50%,#dedede);border-right:1px solid #c9c9c9;border-left:1px solid #fdfdfd;border-bottom:1px solid #d0d0d0"></div>
<div class="t" style="left:289.25px;top:204.99px;font-size:11px;color:#2a2a2a;font-weight:bold;transform:scaleX(0.9102);transform-origin:0 0;">LOAD IDENTIFICATION</div>
<div class="a" style="left:455px;top:200px;width:290px;height:20px;background:linear-gradient(#fafafa,#ececec 50%,#dedede);border-right:1px solid #c9c9c9;border-left:1px solid #fdfdfd;border-bottom:1px solid #d0d0d0"></div>
<div class="t" style="left:484.50px;top:204.99px;font-size:11px;color:#2a2a2a;font-weight:bold;transform:scaleX(0.9160);transform-origin:0 0;">DISCHARGING PATTERN AMPS (MINS or CONT)</div>
<div class="a" style="left:745px;top:200px;width:206.5px;height:20px;background:linear-gradient(#fafafa,#ececec 50%,#dedede);border-right:1px solid #c9c9c9;border-left:1px solid #fdfdfd;border-bottom:1px solid #d0d0d0"></div>
<div class="t" style="left:801.90px;top:204.99px;font-size:11px;color:#2a2a2a;font-weight:bold;transform:scaleX(0.8958);transform-origin:0 0;">SUM OF PATTERNS</div>
<div class="a" style="left:951.5px;top:200px;width:123.5px;height:20px;background:linear-gradient(#fafafa,#ececec 50%,#dedede);border-right:1px solid #c9c9c9;border-left:1px solid #fdfdfd;border-bottom:1px solid #d0d0d0"></div>
<div class="t" style="left:966.10px;top:204.99px;font-size:11px;color:#2a2a2a;font-weight:bold;transform:scaleX(0.8540);transform-origin:0 0;">AVERAGE CURRENT</div>
<div class="a" style="left:234px;top:220px;width:74.5px;height:20.5px;background:linear-gradient(#fafafa,#ececec 50%,#dedede);border-right:1px solid #c9c9c9;border-left:1px solid #fdfdfd;border-bottom:1px solid #c6c6c6"></div>
<div class="t" style="left:246.77px;top:225.19px;font-size:11px;color:#2a2a2a;font-weight:bold;transform:scaleX(0.9100);transform-origin:0 0;">Bus Name</div>
<div class="a" style="left:308.5px;top:220px;width:146.5px;height:20.5px;background:linear-gradient(#fafafa,#ececec 50%,#dedede);border-right:1px solid #c9c9c9;border-left:1px solid #fdfdfd;border-bottom:1px solid #c6c6c6"></div>
<div class="t" style="left:340.87px;top:225.19px;font-size:11px;color:#2a2a2a;font-weight:bold;transform:scaleX(0.9100);transform-origin:0 0;">Equipment Name</div>
<div class="a" style="left:455px;top:220px;width:63.5px;height:20.5px;background:linear-gradient(#fafafa,#ececec 50%,#dedede);border-right:1px solid #c9c9c9;border-left:1px solid #fdfdfd;border-bottom:1px solid #c6c6c6"></div>
<div class="t" style="left:465.33px;top:225.19px;font-size:11px;color:#2a2a2a;font-weight:bold;transform:scaleX(0.9100);transform-origin:0 0;">Pattern 1</div>
<div class="a" style="left:518.5px;top:220px;width:162.5px;height:20.5px;background:linear-gradient(#fafafa,#ececec 50%,#dedede);border-right:1px solid #c9c9c9;border-left:1px solid #fdfdfd;border-bottom:1px solid #c6c6c6"></div>
<div class="t" style="left:578.33px;top:225.19px;font-size:11px;color:#2a2a2a;font-weight:bold;transform:scaleX(0.9100);transform-origin:0 0;">Pattern 2</div>
<div class="a" style="left:681px;top:220px;width:64px;height:20.5px;background:linear-gradient(#fafafa,#ececec 50%,#dedede);border-right:1px solid #c9c9c9;border-left:1px solid #fdfdfd;border-bottom:1px solid #c6c6c6"></div>
<div class="t" style="left:691.58px;top:225.19px;font-size:11px;color:#2a2a2a;font-weight:bold;transform:scaleX(0.9100);transform-origin:0 0;">Pattern 3</div>
<div class="a" style="left:745px;top:220px;width:96.5px;height:20.5px;background:linear-gradient(#fafafa,#ececec 50%,#dedede);border-right:1px solid #c9c9c9;border-left:1px solid #fdfdfd;border-bottom:1px solid #c6c6c6"></div>
<div class="t" style="left:767.95px;top:225.19px;font-size:11px;color:#2a2a2a;font-weight:bold;transform:scaleX(0.9100);transform-origin:0 0;">AMP-MINS</div>
<div class="a" style="left:841.5px;top:220px;width:110.0px;height:20.5px;background:linear-gradient(#fafafa,#ececec 50%,#dedede);border-right:1px solid #c9c9c9;border-left:1px solid #fdfdfd;border-bottom:1px solid #c6c6c6"></div>
<div class="t" style="left:863.14px;top:225.19px;font-size:11px;color:#2a2a2a;font-weight:bold;transform:scaleX(0.9100);transform-origin:0 0;">AMPS (CONT)</div>
<div class="a" style="left:951.5px;top:220px;width:123.5px;height:20.5px;background:linear-gradient(#fafafa,#ececec 50%,#dedede);border-right:1px solid #c9c9c9;border-left:1px solid #fdfdfd;border-bottom:1px solid #c6c6c6"></div>
<div class="t" style="left:998.79px;top:225.19px;font-size:11px;color:#2a2a2a;font-weight:bold;transform:scaleX(0.9100);transform-origin:0 0;">AMPS</div>
<div class="a" style="left:234px;top:240.5px;width:74.5px;height:20.0px;background:#c0e3f3;border-right:1px solid #b5dbec;border-bottom:1px solid #b5dbec"></div>
<div class="a" style="left:308.5px;top:240.5px;width:146.5px;height:20.0px;background:#c0e3f3;border-right:1px solid #b5dbec;border-bottom:1px solid #b5dbec"></div>
<div class="a" style="left:455px;top:240.5px;width:63.5px;height:20.0px;background:#c0e3f3;border-right:1px solid #b5dbec;border-bottom:1px solid #b5dbec"></div>
<div class="a" style="left:518.5px;top:240.5px;width:162.5px;height:20.0px;background:#c0e3f3;border-right:1px solid #b5dbec;border-bottom:1px solid #b5dbec"></div>
<div class="a" style="left:681px;top:240.5px;width:64px;height:20.0px;background:#c0e3f3;border-right:1px solid #b5dbec;border-bottom:1px solid #b5dbec"></div>
<div class="a" style="left:745px;top:240.5px;width:96.5px;height:20.0px;background:#c0e3f3;border-right:1px solid #b5dbec;border-bottom:1px solid #b5dbec"></div>
<div class="a" style="left:841.5px;top:240.5px;width:110.0px;height:20.0px;background:#c0e3f3;border-right:1px solid #b5dbec;border-bottom:1px solid #b5dbec"></div>
<div class="a" style="left:951.5px;top:240.5px;width:123.5px;height:20.0px;background:#c0e3f3;border-right:1px solid #b5dbec;border-bottom:1px solid #b5dbec"></div>
<div class="a" style="left:234px;top:260.5px;width:74.5px;height:20.5px;background:#f7f7f7;border-right:1px solid #ececec;border-bottom:1px solid #efefef"></div>
<div class="a" style="left:308.5px;top:260.5px;width:146.5px;height:20.5px;background:#f7f7f7;border-right:1px solid #ececec;border-bottom:1px solid #efefef"></div>
<div class="a" style="left:455px;top:260.5px;width:63.5px;height:20.5px;background:#eef6eb;border-right:1px solid #ececec;border-bottom:1px solid #efefef"></div>
<div class="a" style="left:518.5px;top:260.5px;width:162.5px;height:20.5px;background:#eef6eb;border-right:1px solid #ececec;border-bottom:1px solid #efefef"></div>
<div class="a" style="left:681px;top:260.5px;width:64px;height:20.5px;background:#eef6eb;border-right:1px solid #ececec;border-bottom:1px solid #efefef"></div>
<div class="a" style="left:745px;top:260.5px;width:96.5px;height:20.5px;background:#f7f7f7;border-right:1px solid #ececec;border-bottom:1px solid #efefef"></div>
<div class="a" style="left:841.5px;top:260.5px;width:110.0px;height:20.5px;background:#f7f7f7;border-right:1px solid #ececec;border-bottom:1px solid #efefef"></div>
<div class="a" style="left:951.5px;top:260.5px;width:123.5px;height:20.5px;background:#f7f7f7;border-right:1px solid #ececec;border-bottom:1px solid #efefef"></div>
<div class="a" style="left:234px;top:281px;width:74.5px;height:20.30000000000001px;background:#fff;border-right:1px solid #ececec;border-bottom:1px solid #efefef"></div>
<div class="a" style="left:308.5px;top:281px;width:146.5px;height:20.30000000000001px;background:#fff;border-right:1px solid #ececec;border-bottom:1px solid #efefef"></div>
<div class="a" style="left:455px;top:281px;width:63.5px;height:20.30000000000001px;background:#eef6eb;border-right:1px solid #ececec;border-bottom:1px solid #efefef"></div>
<div class="a" style="left:518.5px;top:281px;width:162.5px;height:20.30000000000001px;background:#eef6eb;border-right:1px solid #ececec;border-bottom:1px solid #efefef"></div>
<div class="a" style="left:681px;top:281px;width:64px;height:20.30000000000001px;background:#eef6eb;border-right:1px solid #ececec;border-bottom:1px solid #efefef"></div>
<div class="a" style="left:745px;top:281px;width:96.5px;height:20.30000000000001px;background:#fff;border-right:1px solid #ececec;border-bottom:1px solid #efefef"></div>
<div class="a" style="left:841.5px;top:281px;width:110.0px;height:20.30000000000001px;background:#fff;border-right:1px solid #ececec;border-bottom:1px solid #efefef"></div>
<div class="a" style="left:951.5px;top:281px;width:123.5px;height:20.30000000000001px;background:#fff;border-right:1px solid #ececec;border-bottom:1px solid #efefef"></div>
<div class="a" style="left:234px;top:301.3px;width:74.5px;height:20.5px;background:#f7f7f7;border-right:1px solid #ececec;border-bottom:1px solid #efefef"></div>
<div class="a" style="left:308.5px;top:301.3px;width:146.5px;height:20.5px;background:#f7f7f7;border-right:1px solid #ececec;border-bottom:1px solid #efefef"></div>
<div class="a" style="left:455px;top:301.3px;width:63.5px;height:20.5px;background:#d1d1d1;border-right:1px solid #ececec;border-bottom:1px solid #efefef"></div>
<div class="a" style="left:518.5px;top:301.3px;width:162.5px;height:20.5px;background:#eef6eb;border-right:1px solid #ececec;border-bottom:1px solid #efefef"></div>
<div class="a" style="left:681px;top:301.3px;width:64px;height:20.5px;background:#eef6eb;border-right:1px solid #ececec;border-bottom:1px solid #efefef"></div>
<div class="a" style="left:745px;top:301.3px;width:96.5px;height:20.5px;background:#f7f7f7;border-right:1px solid #ececec;border-bottom:1px solid #efefef"></div>
<div class="a" style="left:841.5px;top:301.3px;width:110.0px;height:20.5px;background:#f7f7f7;border-right:1px solid #ececec;border-bottom:1px solid #efefef"></div>
<div class="a" style="left:951.5px;top:301.3px;width:123.5px;height:20.5px;background:#f7f7f7;border-right:1px solid #ececec;border-bottom:1px solid #efefef"></div>
<div class="a" style="left:234px;top:321.8px;width:74.5px;height:20.399999999999977px;background:#c0e3f3;border-right:1px solid #b5dbec;border-bottom:1px solid #b5dbec"></div>
<div class="a" style="left:308.5px;top:321.8px;width:146.5px;height:20.399999999999977px;background:#c0e3f3;border-right:1px solid #b5dbec;border-bottom:1px solid #b5dbec"></div>
<div class="a" style="left:455px;top:321.8px;width:63.5px;height:20.399999999999977px;background:#c0e3f3;border-right:1px solid #b5dbec;border-bottom:1px solid #b5dbec"></div>
<div class="a" style="left:518.5px;top:321.8px;width:162.5px;height:20.399999999999977px;background:#c0e3f3;border-right:1px solid #b5dbec;border-bottom:1px solid #b5dbec"></div>
<div class="a" style="left:681px;top:321.8px;width:64px;height:20.399999999999977px;background:#c0e3f3;border-right:1px solid #b5dbec;border-bottom:1px solid #b5dbec"></div>
<div class="a" style="left:745px;top:321.8px;width:96.5px;height:20.399999999999977px;background:#c0e3f3;border-right:1px solid #b5dbec;border-bottom:1px solid #b5dbec"></div>
<div class="a" style="left:841.5px;top:321.8px;width:110.0px;height:20.399999999999977px;background:#c0e3f3;border-right:1px solid #b5dbec;border-bottom:1px solid #b5dbec"></div>
<div class="a" style="left:951.5px;top:321.8px;width:123.5px;height:20.399999999999977px;background:#c0e3f3;border-right:1px solid #b5dbec;border-bottom:1px solid #b5dbec"></div>
<div class="a" style="left:234px;top:342.2px;width:74.5px;height:20.30000000000001px;background:#f7f7f7;border-right:1px solid #ececec;border-bottom:1px solid #efefef"></div>
<div class="a" style="left:308.5px;top:342.2px;width:146.5px;height:20.30000000000001px;background:#f7f7f7;border-right:1px solid #ececec;border-bottom:1px solid #efefef"></div>
<div class="a" style="left:455px;top:342.2px;width:63.5px;height:20.30000000000001px;background:#f7f7f7;border-right:1px solid #ececec;border-bottom:1px solid #efefef"></div>
<div class="a" style="left:518.5px;top:342.2px;width:162.5px;height:20.30000000000001px;background:#f7f7f7;border-right:1px solid #ececec;border-bottom:1px solid #efefef"></div>
<div class="a" style="left:681px;top:342.2px;width:64px;height:20.30000000000001px;background:#f7f7f7;border-right:1px solid #ececec;border-bottom:1px solid #efefef"></div>
<div class="a" style="left:745px;top:342.2px;width:96.5px;height:20.30000000000001px;background:#f7f7f7;border-right:1px solid #ececec;border-bottom:1px solid #efefef"></div>
<div class="a" style="left:841.5px;top:342.2px;width:110.0px;height:20.30000000000001px;background:#f7f7f7;border-right:1px solid #ececec;border-bottom:1px solid #efefef"></div>
<div class="a" style="left:951.5px;top:342.2px;width:123.5px;height:20.30000000000001px;background:#f7f7f7;border-right:1px solid #ececec;border-bottom:1px solid #efefef"></div>
<div class="a" style="left:234px;top:362.5px;width:74.5px;height:21.0px;background:#fff;border-right:1px solid #ececec;border-bottom:1px solid #efefef"></div>
<div class="a" style="left:308.5px;top:362.5px;width:146.5px;height:21.0px;background:#fff;border-right:1px solid #ececec;border-bottom:1px solid #efefef"></div>
<div class="a" style="left:455px;top:362.5px;width:63.5px;height:21.0px;background:#fff;border-right:1px solid #ececec;border-bottom:1px solid #efefef"></div>
<div class="a" style="left:518.5px;top:362.5px;width:162.5px;height:21.0px;background:#fff;border-right:1px solid #ececec;border-bottom:1px solid #efefef"></div>
<div class="a" style="left:681px;top:362.5px;width:64px;height:21.0px;background:#fff;border-right:1px solid #ececec;border-bottom:1px solid #efefef"></div>
<div class="a" style="left:745px;top:362.5px;width:96.5px;height:21.0px;background:#fff;border-right:1px solid #ececec;border-bottom:1px solid #efefef"></div>
<div class="a" style="left:841.5px;top:362.5px;width:110.0px;height:21.0px;background:#fff;border-right:1px solid #ececec;border-bottom:1px solid #efefef"></div>
<div class="a" style="left:951.5px;top:362.5px;width:123.5px;height:21.0px;background:#fff;border-right:1px solid #ececec;border-bottom:1px solid #efefef"></div>
<div class="t" style="left:237.00px;top:244.99px;font-size:11px;color:#111;font-weight:bold;transform:scaleX(0.8593);transform-origin:0 0;">BATTERY BUS</div>
<div class="t" style="left:311.50px;top:264.99px;font-size:11px;color:#474747;transform:scaleX(0.8448);transform-origin:0 0;">BATT_LOAD1</div>
<div class="t" style="left:458.00px;top:264.99px;font-size:11px;color:#4d8a4d;transform:scaleX(0.8802);transform-origin:0 0;">2(10)</div>
<div class="t" style="left:684.00px;top:264.99px;font-size:11px;color:#4d8a4d;transform:scaleX(0.9348);transform-origin:0 0;">4(cont)</div>
<div class="t" style="left:748.00px;top:264.99px;font-size:11px;color:#474747;transform:scaleX(0.8750);transform-origin:0 0;">20.0</div>
<div class="t" style="left:844.50px;top:264.99px;font-size:11px;color:#474747;transform:scaleX(0.8750);transform-origin:0 0;">4.0</div>
<div class="t" style="left:954.50px;top:264.99px;font-size:11px;color:#474747;transform:scaleX(0.8750);transform-origin:0 0;">4.1</div>
<div class="t" style="left:311.50px;top:285.49px;font-size:11px;color:#474747;transform:scaleX(0.8448);transform-origin:0 0;">BATT_LOAD2</div>
<div class="t" style="left:748.00px;top:285.49px;font-size:11px;color:#474747;transform:scaleX(0.8750);transform-origin:0 0;">0.0</div>
<div class="t" style="left:844.50px;top:285.49px;font-size:11px;color:#474747;transform:scaleX(0.8750);transform-origin:0 0;">0.0</div>
<div class="t" style="left:954.50px;top:285.49px;font-size:11px;color:#474747;transform:scaleX(0.8750);transform-origin:0 0;">0.0</div>
<div class="t" style="left:311.50px;top:305.79px;font-size:11px;color:#474747;transform:scaleX(0.8448);transform-origin:0 0;">BATT_LOAD3</div>
<div class="t" style="left:458.00px;top:305.79px;font-size:11px;color:#474747;transform:scaleX(0.8691);transform-origin:0 0;">4(3)</div>
<div class="t" style="left:748.00px;top:305.79px;font-size:11px;color:#474747;transform:scaleX(0.8750);transform-origin:0 0;">12.0</div>
<div class="t" style="left:844.50px;top:305.79px;font-size:11px;color:#474747;transform:scaleX(0.8750);transform-origin:0 0;">0.0</div>
<div class="t" style="left:954.50px;top:305.79px;font-size:11px;color:#474747;transform:scaleX(0.8750);transform-origin:0 0;">0.033</div>
<div class="t" style="left:237.00px;top:326.29px;font-size:11px;color:#111;font-weight:bold;transform:scaleX(0.8698);transform-origin:0 0;">TOTAL</div>
<div class="t" style="left:311.50px;top:326.29px;font-size:11px;color:#111;font-weight:bold;transform:scaleX(0.9334);transform-origin:0 0;">Battery Capacity (AMP-MI...</div>
<div class="t" style="left:521.50px;top:326.29px;font-size:11px;color:#111;font-weight:bold;transform:scaleX(0.9228);transform-origin:0 0;">Battery Elapsed Time (MINS)</div>
<div class="t" style="left:748.00px;top:326.29px;font-size:11px;color:#111;font-weight:bold;transform:scaleX(0.9456);transform-origin:0 0;">TOTAL AMP-MINS</div>
<div class="t" style="left:844.50px;top:326.29px;font-size:11px;color:#111;font-weight:bold;transform:scaleX(0.9110);transform-origin:0 0;">TOTAL AMPS (CONT)</div>
<div class="t" style="left:954.50px;top:326.29px;font-size:11px;color:#111;font-weight:bold;transform:scaleX(0.8847);transform-origin:0 0;">TOTAL AVERAGE (AMPS)</div>
<div class="t" style="left:311.50px;top:346.69px;font-size:11px;color:#474747;transform:scaleX(0.8769);transform-origin:0 0;">1488.0</div>
<div class="t" style="left:521.50px;top:346.69px;font-size:11px;color:#474747;transform:scaleX(0.8538);transform-origin:0 0;">364.0</div>
<div class="t" style="left:748.00px;top:346.69px;font-size:11px;color:#474747;transform:scaleX(0.8750);transform-origin:0 0;">32.0</div>
<div class="t" style="left:844.50px;top:346.69px;font-size:11px;color:#474747;transform:scaleX(0.8750);transform-origin:0 0;">4.0</div>
<div class="t" style="left:954.50px;top:346.69px;font-size:11px;color:#474747;transform:scaleX(0.8750);transform-origin:0 0;">4.1</div>
<div class="a" style="left:234px;top:383.5px;width:841px;height:12px;background:#e9e9e9;border-top:1px solid #dcdcdc"></div>
<div class="a" style="left:243.5px;top:385px;width:821px;height:9.5px;background:linear-gradient(#f6f6f6,#e4e4e4);border:1px solid #c4c4c4;border-radius:3px"></div>
<svg class="a" style="left:236px;top:386px;" width="5" height="7" viewBox="0 0 5 7"><path d="M4 .5l-3 3 3 3" fill="none" stroke="#888" stroke-width="1"/></svg>
<svg class="a" style="left:1068px;top:386px;" width="5" height="7" viewBox="0 0 5 7"><path d="M1 .5l3 3-3 3" fill="none" stroke="#888" stroke-width="1"/></svg>
<div class="a" style="left:233px;top:395.5px;width:842px;height:1px;background:#d2d2d2"></div>
<div class="a" style="left:977.5px;top:408.5px;width:28.5px;height:21px;background:linear-gradient(#f4f4f4,#e4e4e4);border:1px solid #b4b4b4;border-radius:3px"></div>
<div class="t" style="left:984.00px;top:413.69px;font-size:11px;color:#222;transform:scaleX(0.8809);transform-origin:0 0;">OK</div>
<div class="a" style="left:1018px;top:408.5px;width:45px;height:21px;background:linear-gradient(#f4f4f4,#e4e4e4);border:1px solid #b4b4b4;border-radius:3px"></div>
<div class="t" style="left:1025.50px;top:413.69px;font-size:11px;color:#222;transform:scaleX(0.8762);transform-origin:0 0;">Cancel</div>
</body></html>
